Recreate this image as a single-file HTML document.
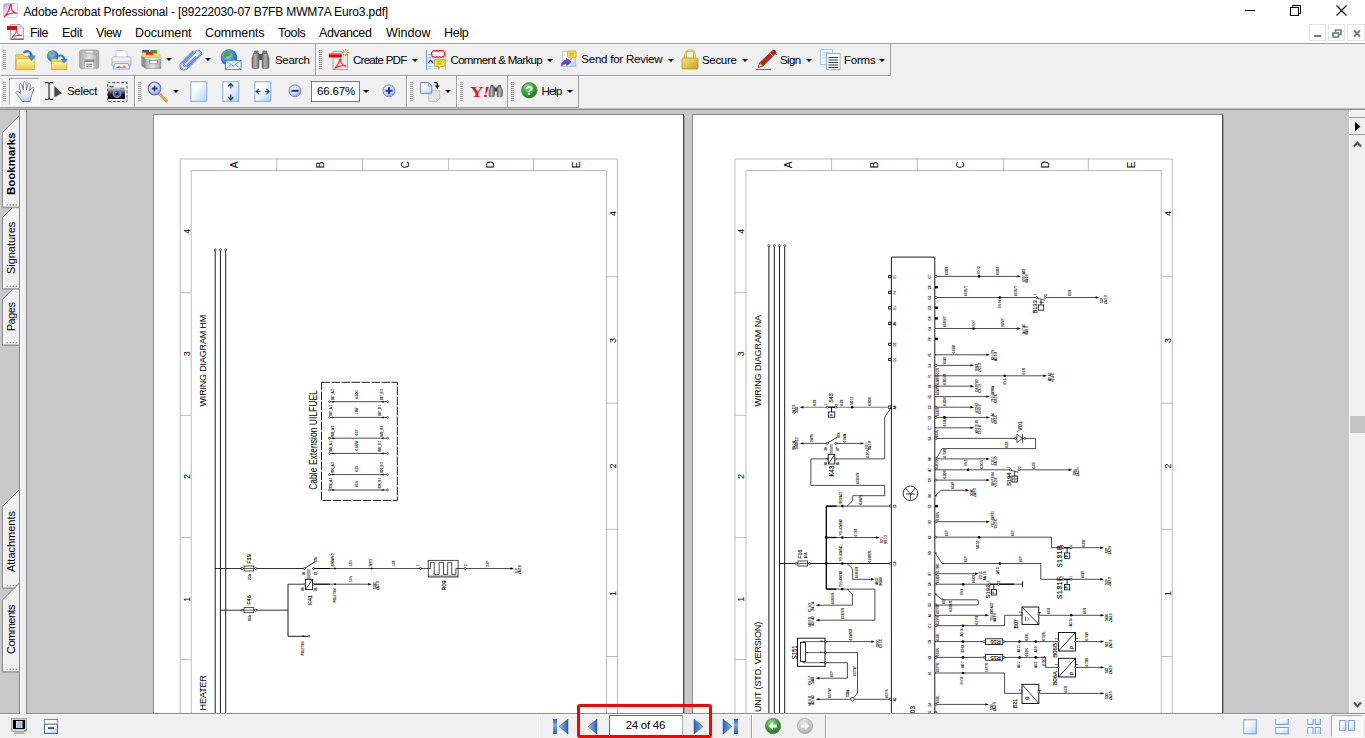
<!DOCTYPE html>
<html><head><meta charset="utf-8"><title>Adobe Acrobat Professional</title>
<style>
html,body{margin:0;padding:0;}
body{width:1365px;height:738px;overflow:hidden;position:relative;background:#fff;font-family:"Liberation Sans",sans-serif;}
.t{position:absolute;white-space:nowrap;}
.a{position:absolute;}
svg{position:absolute;overflow:visible;}
svg text{font-family:"Liberation Sans",sans-serif;}
</style></head><body>
<div class="a" style="left:0px;top:0px;width:1365px;height:22px;background:#fff"></div>
<svg style="left:3px;top:3px" width="15" height="15" viewBox="0 0 15 15"><defs><linearGradient id="ai" x1="0" y1="0" x2="1" y2="1"><stop offset="0" stop-color="#b88ae4"/><stop offset=".55" stop-color="#fff"/><stop offset="1" stop-color="#fff"/></linearGradient></defs>
<rect x=".5" y=".5" width="14" height="14" rx="2" fill="url(#ai)" stroke="#c8c8d0" stroke-width=".8"/>
<path d="M1.5 13.5C4 11 6.5 6.5 7 2.5C7.3 1 8.6 1.2 8.3 2.8C7.6 6 8.5 8.3 13.5 10.3C11 9 5 10.5 1.5 13.5Z" fill="none" stroke="#e8242c" stroke-width="1.2" stroke-linejoin="round"/></svg>
<span class="t" style="left:23.5px;top:5.64px;font-size:12px;line-height:12px;letter-spacing:-0.143px;color:#000;">Adobe Acrobat Professional - [89222030-07 B7FB MWM7A Euro3.pdf]</span>
<svg style="left:1245px;top:10px" width="10" height="1" viewBox="0 0 10 1"><rect width="10" height="1" fill="#000"/></svg>
<svg style="left:1290px;top:5px" width="11" height="11" viewBox="0 0 11 11"><path d="M2.5 2.5V.5H10.5V8.5H8.5" fill="none" stroke="#000"/><rect x=".5" y="2.5" width="8" height="8" fill="#fff" stroke="#000"/></svg>
<svg style="left:1336px;top:5px" width="11" height="11" viewBox="0 0 11 11"><path d="M.5 .5L10.5 10.5M10.5 .5L.5 10.5" stroke="#000" stroke-width="1.1"/></svg>
<div class="a" style="left:0px;top:22px;width:1365px;height:21px;background:#fff"></div>
<svg style="left:7px;top:23.3px" width="18" height="18" viewBox="0 0 18 18"><path d="M3.5 1.5H13L16.5 5V16.5H3.5Z" fill="#f4f4f4" stroke="#9a9a9a" stroke-width=".8"/><path d="M13 1.5V5H16.5" fill="#ddd" stroke="#9a9a9a" stroke-width=".6"/>
<rect x="0" y="3" width="10" height="4" fill="#e60012"/><rect x="3.5" y="15.5" width="13" height="1.2" fill="#555"/>
<path d="M5 14.5C7 12.5 9 10 9.3 7.8C9.5 6.8 10.4 7 10.2 8C9.8 10 10.5 11.4 14.5 12.6C12 12 7.5 12.8 5 14.5Z" fill="none" stroke="#e8242c" stroke-width="1"/></svg>
<span class="t" style="left:30.0px;top:26.62px;font-size:12.5px;line-height:12.5px;letter-spacing:-0.535px;color:#000;">File</span>
<span class="t" style="left:62.0px;top:26.62px;font-size:12.5px;line-height:12.5px;letter-spacing:-0.260px;color:#000;">Edit</span>
<span class="t" style="left:96.0px;top:26.62px;font-size:12.5px;line-height:12.5px;letter-spacing:-0.467px;color:#000;">View</span>
<span class="t" style="left:135.0px;top:26.62px;font-size:12.5px;line-height:12.5px;letter-spacing:-0.058px;color:#000;">Document</span>
<span class="t" style="left:205.0px;top:26.62px;font-size:12.5px;line-height:12.5px;letter-spacing:-0.116px;color:#000;">Comments</span>
<span class="t" style="left:278.0px;top:26.62px;font-size:12.5px;line-height:12.5px;letter-spacing:-0.336px;color:#000;">Tools</span>
<span class="t" style="left:319.0px;top:26.62px;font-size:12.5px;line-height:12.5px;letter-spacing:-0.387px;color:#000;">Advanced</span>
<span class="t" style="left:386.0px;top:26.62px;font-size:12.5px;line-height:12.5px;letter-spacing:0.007px;color:#000;">Window</span>
<span class="t" style="left:444.0px;top:26.62px;font-size:12.5px;line-height:12.5px;letter-spacing:-0.302px;color:#000;">Help</span>
<div class="a" style="left:1309px;top:24px;width:17px;height:17px;border:1px solid #e3e3e3;box-sizing:border-box;background:#fff"></div>
<div class="a" style="left:1328px;top:24px;width:17px;height:17px;border:1px solid #e3e3e3;box-sizing:border-box;background:#fff"></div>
<div class="a" style="left:1347px;top:24px;width:18px;height:17px;border:1px solid #e3e3e3;box-sizing:border-box;background:#fff"></div>
<svg style="left:1314px;top:35px" width="7" height="2" viewBox="0 0 7 2"><rect width="7" height="2" fill="#6c7c90"/></svg>
<svg style="left:1332px;top:29px" width="10" height="9" viewBox="0 0 10 9"><path d="M3.5 3V1H9V5.5H7" fill="none" stroke="#6c7c90" stroke-width="1.6"/><rect x="1" y="4" width="5.5" height="4" fill="#fff" stroke="#6c7c90" stroke-width="1.6"/></svg>
<svg style="left:1353px;top:30px" width="8" height="7" viewBox="0 0 8 7"><path d="M1 .5L7 6.5M7 .5L1 6.5" stroke="#6c7c90" stroke-width="2"/></svg>
<div class="a" style="left:0px;top:43px;width:1365px;height:65px;background:#f0f0f0"></div>
<div class="a" style="left:0px;top:43px;width:1365px;height:1px;background:#a0a0a0"></div>
<div class="a" style="left:0px;top:75px;width:891px;height:1px;background:#a0a0a0"></div>
<div class="a" style="left:0px;top:76px;width:891px;height:1px;background:#fafafa"></div>
<div class="a" style="left:890px;top:44px;width:1px;height:32px;background:#a0a0a0"></div>
<div class="a" style="left:0px;top:44px;width:1px;height:64px;background:#fff"></div>
<div class="a" style="left:315px;top:44px;width:1px;height:31px;background:#a0a0a0"></div>
<div class="a" style="left:316px;top:44px;width:1px;height:31px;background:#fff"></div>
<div class="a" style="left:0px;top:107px;width:579px;height:1px;background:#a0a0a0"></div>
<div class="a" style="left:578px;top:76px;width:1px;height:32px;background:#a0a0a0"></div>
<div class="a" style="left:134px;top:76px;width:1px;height:31px;background:#a0a0a0"></div>
<div class="a" style="left:135px;top:76px;width:1px;height:31px;background:#fff"></div>
<div class="a" style="left:406px;top:76px;width:1px;height:31px;background:#a0a0a0"></div>
<div class="a" style="left:407px;top:76px;width:1px;height:31px;background:#fff"></div>
<div class="a" style="left:456px;top:76px;width:1px;height:31px;background:#a0a0a0"></div>
<div class="a" style="left:457px;top:76px;width:1px;height:31px;background:#fff"></div>
<div class="a" style="left:507px;top:76px;width:1px;height:31px;background:#a0a0a0"></div>
<div class="a" style="left:508px;top:76px;width:1px;height:31px;background:#fff"></div>
<div class="a" style="left:0px;top:108px;width:1365px;height:1px;background:#c0c0c0"></div>
<div class="a" style="left:0px;top:109px;width:1365px;height:1px;background:#8a8a8a"></div>
<svg width="0" height="0" style="position:absolute"><defs>
<linearGradient id="gF" x1="0" y1="0" x2="0" y2="1"><stop offset="0" stop-color="#fff9c0"/><stop offset="1" stop-color="#f0c838"/></linearGradient>
<linearGradient id="gFb" x1="0" y1="0" x2="0" y2="1"><stop offset="0" stop-color="#f4d860"/><stop offset="1" stop-color="#dcae28"/></linearGradient>
<linearGradient id="gBl" x1="0" y1="0" x2="0" y2="1"><stop offset="0" stop-color="#8fc0f0"/><stop offset="1" stop-color="#2a6fc8"/></linearGradient>
<radialGradient id="gGl" cx=".4" cy=".35" r=".7"><stop offset="0" stop-color="#bfe0ff"/><stop offset=".5" stop-color="#4a90e0"/><stop offset="1" stop-color="#1a50b0"/></radialGradient>
<linearGradient id="gGr" x1="0" y1="0" x2="1" y2="0"><stop offset="0" stop-color="#a8a8a8"/><stop offset=".5" stop-color="#e4e4e4"/><stop offset="1" stop-color="#a0a0a0"/></linearGradient>
<linearGradient id="gBn" x1="0" y1="0" x2="1" y2="0"><stop offset="0" stop-color="#6a6a6a"/><stop offset=".45" stop-color="#b4b4b4"/><stop offset="1" stop-color="#666"/></linearGradient>
<linearGradient id="gPg" x1="0" y1="0" x2="1" y2="1"><stop offset="0" stop-color="#ffffff"/><stop offset=".35" stop-color="#fafcff"/><stop offset="1" stop-color="#b4cef2"/></linearGradient>
<radialGradient id="gZ" cx=".4" cy=".35" r=".7"><stop offset="0" stop-color="#ffffff"/><stop offset=".6" stop-color="#c0d4f4"/><stop offset="1" stop-color="#8098d8"/></radialGradient>
<radialGradient id="gHp" cx=".4" cy=".3" r=".8"><stop offset="0" stop-color="#a0e090"/><stop offset=".5" stop-color="#38a038"/><stop offset="1" stop-color="#1a6a20"/></radialGradient>
<radialGradient id="gGy" cx=".4" cy=".3" r=".8"><stop offset="0" stop-color="#e8e8e8"/><stop offset="1" stop-color="#a8a8a8"/></radialGradient>
<linearGradient id="gLk" x1="0" y1="0" x2="1" y2="1"><stop offset="0" stop-color="#f8e880"/><stop offset="1" stop-color="#c8a020"/></linearGradient>
<linearGradient id="gNv" x1="0" y1="0" x2="1" y2="0"><stop offset="0" stop-color="#2a62b8"/><stop offset="1" stop-color="#8ab4ec"/></linearGradient>
<linearGradient id="gNvL" x1="0" y1="0" x2="1" y2="0"><stop offset="0" stop-color="#9cc0f0"/><stop offset="1" stop-color="#2a5cb0"/></linearGradient>
</defs></svg>
<svg style="left:3px;top:50px" width="3" height="20" viewBox="0 0 3 20"><rect x="0" y="0" width="3" height="1" fill="#a0a0a0"/><rect x="0" y="2" width="3" height="1" fill="#a0a0a0"/><rect x="0" y="4" width="3" height="1" fill="#a0a0a0"/><rect x="0" y="6" width="3" height="1" fill="#a0a0a0"/><rect x="0" y="8" width="3" height="1" fill="#a0a0a0"/><rect x="0" y="10" width="3" height="1" fill="#a0a0a0"/><rect x="0" y="12" width="3" height="1" fill="#a0a0a0"/><rect x="0" y="14" width="3" height="1" fill="#a0a0a0"/><rect x="0" y="16" width="3" height="1" fill="#a0a0a0"/><rect x="0" y="18" width="3" height="1" fill="#a0a0a0"/></svg>
<svg style="left:15px;top:49px" width="21" height="22" viewBox="0 0 21 22"><path d="M.6 20.600V6.600Q.6 5.200 2 5.200H7.500L9.800 7.600H18.300Q19.500 7.600 19.500 8.800V20.600Z" fill="url(#gFb)" stroke="#c49a20" stroke-width=".6"/>
<path d="M.6 20.600L1.500 11Q1.600 10 2.600 10H19Q19.900 10 19.800 11L19.300 20.600Z" fill="url(#gF)" stroke="#d4a820" stroke-width=".5"/>
<path d="M8.500 4C11.500 .8 16.500 2 16.800 8" fill="none" stroke="#3a78d0" stroke-width="2.300"/><path d="M12.800 6.800H20.300L16.600 11.800Z" fill="#4a8ae0" stroke="#2a60c0" stroke-width=".4"/></svg>
<svg style="left:47px;top:49px" width="21" height="22" viewBox="0 0 21 22"><circle cx="5.800" cy="7" r="5.600" fill="url(#gGl)" stroke="#3a6cc0" stroke-width=".4"/><path d="M3.500 3.500C5.500 2.500 7.500 3.500 6.500 5.500C5.500 7 4 6 3 8C2 6.500 2.200 4.500 3.500 3.500Z" fill="#68b858"/>
<path d="M4.300 20.600V10.600Q4.300 9.500 5.400 9.500H9L10.500 11H18.800Q19.900 11 19.900 12V20.600Z" fill="url(#gFb)" stroke="#c49a20" stroke-width=".5"/>
<path d="M4.300 20.600L4.900 13.500Q5 12.700 5.800 12.700H19.300Q20 12.700 19.900 13.500L19.500 20.600Z" fill="url(#gF)" stroke="#d4a820" stroke-width=".4"/>
<path d="M11.500 7.500C13.500 5.500 17 6.500 17.300 10.500" fill="none" stroke="#3a78d0" stroke-width="2"/><path d="M14 10H20.300L17.200 14Z" fill="#4a8ae0" stroke="#2a60c0" stroke-width=".4"/></svg>
<svg style="left:79px;top:49px" width="21" height="21" viewBox="0 0 21 21"><path d="M.5 3Q.5 1 2.500 1H17.500Q19.800 1 19.800 3V17.600Q19.800 19.600 17.500 19.600H2.500Q.5 19.600 .5 17.600Z" fill="url(#gGr)" stroke="#909090" stroke-width=".6"/>
<rect x="6" y="1.300" width="9" height="3.600" fill="#d8d8d8" stroke="#888" stroke-width=".5"/><rect x="7.500" y="2" width="5.500" height="1.200" fill="#f4f4f4"/>
<rect x="5.300" y="10.500" width="10" height="2.500" fill="#8a8a8a"/><rect x="5.800" y="13" width="9" height="6.600" fill="#fafafa" stroke="#999" stroke-width=".4"/><path d="M7.300 15.300H13.300M7.300 17.400H13.300" stroke="#666" stroke-width=".9"/></svg>
<svg style="left:111px;top:49px" width="21" height="21" viewBox="0 0 21 21"><path d="M5 9V1.5H13L16 4.5V9Z" fill="#fff" stroke="#a8b8d0" stroke-width=".7"/>
<path d="M1 9.5Q1 8 2.5 8H18.5Q20 8 20 9.5V16Q20 17 19 17H2Q1 17 1 16Z" fill="#dcdcdc" stroke="#999" stroke-width=".7"/>
<rect x="1.5" y="8.5" width="18" height="3" fill="#f2f2f2"/>
<path d="M4 14.5H17L19 20H2Z" fill="#e8f0ff" stroke="#6a9ad8" stroke-width=".7"/><path d="M5 19L8 16.5L10.5 18.5L13 16L16 19Z" fill="#e0a020"/><path d="M5 19L7 17.5L9 19Z" fill="#d04020"/></svg>
<svg style="left:141px;top:49px" width="21" height="21" viewBox="0 0 21 21"><rect x="1.300" y="1" width="6.800" height="3" fill="#2058c8"/><rect x="9.300" y="1" width="6.800" height="3.500" fill="#20b030"/><rect x="4.500" y="3" width="7.500" height="3.500" fill="#e82030"/>
<path d="M1.300 3.500H4.500V6H12V4.500H17V5.500H19V8.500H1.300Z" fill="#f4dc50" stroke="#c8a828" stroke-width=".4"/>
<path d="M.3 6.500L4 9V19.600L.3 16.500Z" fill="#909090"/><rect x="4" y="8.500" width="16" height="11.100" fill="url(#gGr)" stroke="#808080" stroke-width=".5"/><rect x="4" y="8.500" width="16" height="1.500" fill="#f0f0f0" opacity=".7"/>
<rect x="8.500" y="11.600" width="8" height="3.200" fill="#fff" stroke="#777" stroke-width=".6"/></svg>
<svg style="left:166px;top:58px" width="6" height="3" viewBox="0 0 6 3"><path d="M0 0H6L3 3Z" fill="#000"/></svg>
<svg style="left:179px;top:49px" width="22" height="22" viewBox="0 0 22 22"><g fill="none" stroke-linecap="round" transform="translate(11.200,10.800) rotate(45)"><path d="M-3.900 -7.500V8.500A3.900 3.900 0 0 0 3.900 8.500V-10A2.900 2.900 0 0 0 -1.900 -10V6.500A1.900 1.900 0 0 0 1.900 6.500V-5.500" stroke="#4272c0" stroke-width="1.800"/>
<path d="M-3.900 -7.500V8.500A3.900 3.900 0 0 0 3.900 8.500V-10A2.900 2.900 0 0 0 -1.900 -10V6.500A1.900 1.900 0 0 0 1.900 6.500V-5.500" stroke="#cfe2fa" stroke-width=".7"/></g></svg>
<svg style="left:205px;top:58px" width="6" height="3" viewBox="0 0 6 3"><path d="M0 0H6L3 3Z" fill="#000"/></svg>
<svg style="left:220px;top:49px" width="22" height="21" viewBox="0 0 22 21"><circle cx="9" cy="8.500" r="8" fill="url(#gGl)" stroke="#2a5cb0" stroke-width=".5"/><path d="M7 2C10 1.500 12 4 10.500 6C9 8 7 6.500 6 9C4.500 10 3 7 4 4.500C5 3 6 2.300 7 2ZM12 9C14.500 8 15 10.500 14 12C13 12.500 12 11 12 9Z" fill="#48a848"/>
<rect x="5.500" y="11.500" width="15.500" height="9" fill="#f4f8ff" stroke="#4a80d0" stroke-width=".9"/><path d="M5.500 11.500L13.250 17L21 11.500M5.500 20.500L11 15.500M21 20.500L15.500 15.500" fill="none" stroke="#4a80d0" stroke-width=".8"/></svg>
<svg style="left:251px;top:49px" width="20" height="21" viewBox="0 0 20 21"><rect x="3" y="1.500" width="4.500" height="4" rx="1" fill="#707880"/><rect x="11.500" y="1.500" width="4.500" height="4" rx="1" fill="#707880"/>
<rect x="7" y="5" width="5" height="6" fill="#555"/>
<path d="M2.500 4.500H8V18Q8 19.500 6.500 19.500H2.500Q1 19.500 1 18V9Z" fill="url(#gBn)" stroke="#606060" stroke-width=".6"/>
<path d="M11 4.500H16.500L18 9V18Q18 19.500 16.500 19.500H12.500Q11 19.500 11 18Z" fill="url(#gBn)" stroke="#606060" stroke-width=".6"/></svg>
<span class="t" style="left:275.0px;top:54.87px;font-size:11.5px;line-height:11.5px;letter-spacing:-0.323px;color:#000;">Search</span>
<svg style="left:319px;top:50px" width="3" height="20" viewBox="0 0 3 20"><rect x="0" y="0" width="3" height="1" fill="#a0a0a0"/><rect x="0" y="2" width="3" height="1" fill="#a0a0a0"/><rect x="0" y="4" width="3" height="1" fill="#a0a0a0"/><rect x="0" y="6" width="3" height="1" fill="#a0a0a0"/><rect x="0" y="8" width="3" height="1" fill="#a0a0a0"/><rect x="0" y="10" width="3" height="1" fill="#a0a0a0"/><rect x="0" y="12" width="3" height="1" fill="#a0a0a0"/><rect x="0" y="14" width="3" height="1" fill="#a0a0a0"/><rect x="0" y="16" width="3" height="1" fill="#a0a0a0"/><rect x="0" y="18" width="3" height="1" fill="#a0a0a0"/></svg>
<svg style="left:328px;top:49px" width="22" height="22" viewBox="0 0 22 22"><path d="M5 2.300H15.600L19.500 6V20.600H5Z" fill="#ececec" stroke="#8e8e8e" stroke-width=".8"/>
<rect x=".8" y="4.500" width="13" height="4" fill="#e60012"/><path d="M.8 4.500H13.800V5.700H.8Z" fill="#ff9090" opacity=".7"/>
<path d="M7 19.300C9.500 16.800 11.300 13.500 11.600 10.800C11.800 9.500 13 9.800 12.800 11C12.300 13.500 13.200 15.400 18 17C15 16.200 10 17.300 7 19.300Z" fill="none" stroke="#f03a44" stroke-width="1.300" stroke-linejoin="round"/>
<g stroke="#f08820" stroke-width="1"><path d="M17.500 0V7M14 3.500H21M15 1L20 6M20 1L15 6"/></g><circle cx="17.500" cy="3.500" r="1.700" fill="#ffe860"/></svg>
<span class="t" style="left:353.0px;top:54.87px;font-size:11.5px;line-height:11.5px;letter-spacing:-0.721px;color:#000;">Create PDF</span>
<svg style="left:412px;top:59px" width="6" height="3" viewBox="0 0 6 3"><path d="M0 0H6L3 3Z" fill="#000"/></svg>
<svg style="left:425px;top:49px" width="22" height="22" viewBox="0 0 22 22"><rect x="2" y="1" width="19" height="20" fill="#eef4fd"/><rect x=".9" y="1" width="1.300" height="20" fill="#7aa0e8"/><rect x="20.200" y="1" width=".8" height="20" fill="#a8c4f0"/>
<path d="M3 5.500H20M3 8.500H20M3 11.500H9M3 14.500H9M3 17.500H12M3 19.800H12" stroke="#a8c0ec" stroke-width=".7"/>
<path d="M7.500 2.600Q8.600 1 10.200 2.200Q11.600 .8 13.200 2.200Q14.800 .8 16.200 2.200Q18 1 19 2.800Q20.600 4.500 19.200 6Q19.500 8 17.500 7.600Q16.200 9 14.600 7.800Q13 9 11.500 7.800Q9.800 9 8.500 7.600Q6.500 7.800 7 6Q5.500 4.200 7.500 2.600Z" fill="#fff" fill-opacity=".7" stroke="#f02028" stroke-width="1.200"/>
<path d="M3.200 13.800L5.600 11.300L8 13.800" fill="none" stroke="#1010d8" stroke-width="1.200"/>
<path d="M10.500 10.300H19Q20 10.300 20 11.300V16.300Q20 17.300 19 17.300H15.800L13.500 20.500V17.300H10.500Q9.500 17.300 9.500 16.300V11.300Q9.500 10.300 10.500 10.300Z" fill="#fae440" stroke="#b08a18" stroke-width=".8"/><path d="M11.800 12.700H17M11.800 14.800H16" stroke="#a88818" stroke-width=".8"/></svg>
<span class="t" style="left:450.5px;top:54.87px;font-size:11.5px;line-height:11.5px;letter-spacing:-0.672px;color:#000;">Comment &amp; Markup</span>
<svg style="left:546.5px;top:59px" width="6" height="3" viewBox="0 0 6 3"><path d="M0 0H6L3 3Z" fill="#000"/></svg>
<svg style="left:561px;top:49px" width="17" height="21" viewBox="0 0 17 21"><rect x="1.800" y="2.200" width="13" height="15.300" fill="url(#gPg)" stroke="#8aa8e0" stroke-width=".6"/>
<path d="M7.600 2H14.200Q15.200 2 15.200 3V7.200Q15.200 8.200 14.200 8.200H11.800L10 10.600V8.200H7.600Q6.600 8.200 6.600 7.200V3Q6.600 2 7.600 2Z" fill="#fae440" stroke="#b89818" stroke-width=".6"/><path d="M8.300 4.200H13.500M8.300 6H13" stroke="#b09018" stroke-width=".7"/>
<path d="M.3 17.300C.3 13 2.500 11.300 5.500 11.300V9.300L10.300 13L5.500 16.700V14.700C3.500 14.700 1.800 15.300 .3 17.300Z" fill="#6a48c0" stroke="#3a2890" stroke-width=".5"/></svg>
<span class="t" style="left:581.3px;top:53.87px;font-size:11.5px;line-height:11.5px;letter-spacing:-0.225px;color:#000;">Send for Review</span>
<svg style="left:668px;top:59px" width="6" height="3" viewBox="0 0 6 3"><path d="M0 0H6L3 3Z" fill="#000"/></svg>
<svg style="left:681px;top:49px" width="18" height="21" viewBox="0 0 18 21"><path d="M4.500 9V6Q4.500 1.500 9 1.500Q13.500 1.500 13.500 6V9" fill="none" stroke="#c8a020" stroke-width="2.200"/><path d="M4.500 9V6Q4.500 1.500 9 1.500Q13.500 1.500 13.500 6V9" fill="none" stroke="#f8e480" stroke-width=".8"/>
<rect x="1" y="9" width="16" height="11" rx="1" fill="url(#gLk)" stroke="#b08810" stroke-width=".7"/></svg>
<span class="t" style="left:702.0px;top:54.87px;font-size:11.5px;line-height:11.5px;letter-spacing:-0.323px;color:#000;">Secure</span>
<svg style="left:741.5px;top:59px" width="6" height="3" viewBox="0 0 6 3"><path d="M0 0H6L3 3Z" fill="#000"/></svg>
<svg style="left:755px;top:49px" width="22" height="21" viewBox="0 0 22 21"><path d="M1 20.500H16" stroke="#444" stroke-width=".8"/><path d="M3 18.500L5 13.500L17.500 1.500Q19 .5 20.500 2Q21.500 3.500 20 5L8 17Z" fill="#c02818" stroke="#701008" stroke-width=".6"/><path d="M3 18.500L5 13.500L8 17Z" fill="#e8d0a0" stroke="#701008" stroke-width=".4"/><path d="M15 4L18 7" stroke="#f0c8c0" stroke-width="1"/><path d="M18.500 .8L21.500 6" stroke="#333" stroke-width=".9"/></svg>
<span class="t" style="left:780.0px;top:54.87px;font-size:11.5px;line-height:11.5px;letter-spacing:-0.629px;color:#000;">Sign</span>
<svg style="left:806px;top:59px" width="6" height="3" viewBox="0 0 6 3"><path d="M0 0H6L3 3Z" fill="#000"/></svg>
<svg style="left:820px;top:49px" width="21" height="21" viewBox="0 0 21 21"><rect x=".5" y=".5" width="12" height="15" fill="#f8fbff" stroke="#9ab8e8" stroke-width=".8"/><path d="M2.500 3.500H10.500M2.500 6H10.500M2.500 8.500H10.500" stroke="#b0c4e8" stroke-width=".8"/>
<rect x="6.500" y="4.500" width="13.500" height="16" fill="#fff" stroke="#7aa0e0" stroke-width=".8"/><path d="M8.500 8.500H18M8.500 11H18M8.500 13.500H18M8.500 16H18M8.500 18.500H18" stroke="#222" stroke-width=".9"/></svg>
<span class="t" style="left:844.0px;top:54.87px;font-size:11.5px;line-height:11.5px;letter-spacing:-0.215px;color:#000;">Forms</span>
<svg style="left:878.5px;top:59px" width="6" height="3" viewBox="0 0 6 3"><path d="M0 0H6L3 3Z" fill="#000"/></svg>
<svg style="left:3px;top:82px" width="3" height="20" viewBox="0 0 3 20"><rect x="0" y="0" width="3" height="1" fill="#a0a0a0"/><rect x="0" y="2" width="3" height="1" fill="#a0a0a0"/><rect x="0" y="4" width="3" height="1" fill="#a0a0a0"/><rect x="0" y="6" width="3" height="1" fill="#a0a0a0"/><rect x="0" y="8" width="3" height="1" fill="#a0a0a0"/><rect x="0" y="10" width="3" height="1" fill="#a0a0a0"/><rect x="0" y="12" width="3" height="1" fill="#a0a0a0"/><rect x="0" y="14" width="3" height="1" fill="#a0a0a0"/><rect x="0" y="16" width="3" height="1" fill="#a0a0a0"/><rect x="0" y="18" width="3" height="1" fill="#a0a0a0"/></svg>
<div class="a" style="left:9px;top:78px;width:31px;height:27px;background:#f7f7f7;border:1px solid #fff;border-top-color:#a8a8a8;border-left-color:#a8a8a8;box-sizing:border-box"></div>
<svg style="left:15px;top:81px" width="20" height="22" viewBox="0 0 20 22"><defs><linearGradient id="gHd" x1="0" y1="0" x2="0" y2="1"><stop offset=".4" stop-color="#fff"/><stop offset="1" stop-color="#c4cee0"/></linearGradient></defs>
<path d="M7 20.500C5.500 17.500 3.500 15 1.600 12.800C.2 11.200 1.800 9.300 3.500 10.600L5.800 12.600L4.300 4.600C3.900 2.600 6.300 2 6.900 3.900L8.300 9L8.400 2.300C8.400 .3 11 .3 11.100 2.300L11.300 9L13 3.300C13.600 1.500 15.900 2.200 15.500 4.100L14.300 10L16.800 6.800C17.900 5.400 19.700 6.600 18.800 8.200C17.200 11.500 16.200 15.500 15.200 20.500Z" fill="url(#gHd)" stroke="#6a7890" stroke-width=".9" stroke-linejoin="round"/></svg>
<svg style="left:44px;top:82px" width="19" height="18" viewBox="0 0 19 18"><path d="M1 .7H4Q5 .7 5 2V16Q5 17.300 4 17.300H1M9 .7H6Q5 .7 5 2M9 17.300H6Q5 17.300 5 16" fill="none" stroke="#000" stroke-width=".95"/><path d="M10.300 4V15.200L18 11.300Z" fill="#484848"/></svg>
<span class="t" style="left:67.0px;top:85.57px;font-size:11.5px;line-height:11.5px;letter-spacing:-0.327px;color:#000;">Select</span>
<svg style="left:107px;top:82px" width="21" height="20" viewBox="0 0 21 20"><rect x=".7" y=".7" width="19.300" height="18.800" fill="none" stroke="#505050" stroke-width="1" stroke-dasharray="2.800 1.700"/>
<defs><linearGradient id="gCm" x1="0" y1="0" x2="0" y2="1"><stop offset="0" stop-color="#e8e8e8"/><stop offset=".3" stop-color="#888"/><stop offset=".6" stop-color="#222"/><stop offset="1" stop-color="#000"/></linearGradient></defs>
<rect x="1" y="5" width="17" height="12" fill="url(#gCm)"/><rect x="2.500" y="3.800" width="4" height="1.500" fill="#555"/><rect x="13" y="5.800" width="4" height="1.600" fill="#50a8f8"/>
<circle cx="10" cy="11.800" r="4.300" fill="#8c98b0"/><circle cx="10" cy="11.800" r="3" fill="#3858b8"/><circle cx="10" cy="11.800" r="1.400" fill="#0c1430"/><circle cx="9" cy="10.800" r=".7" fill="#a8d0ff"/></svg>
<svg style="left:138px;top:82px" width="3" height="20" viewBox="0 0 3 20"><rect x="0" y="0" width="3" height="1" fill="#a0a0a0"/><rect x="0" y="2" width="3" height="1" fill="#a0a0a0"/><rect x="0" y="4" width="3" height="1" fill="#a0a0a0"/><rect x="0" y="6" width="3" height="1" fill="#a0a0a0"/><rect x="0" y="8" width="3" height="1" fill="#a0a0a0"/><rect x="0" y="10" width="3" height="1" fill="#a0a0a0"/><rect x="0" y="12" width="3" height="1" fill="#a0a0a0"/><rect x="0" y="14" width="3" height="1" fill="#a0a0a0"/><rect x="0" y="16" width="3" height="1" fill="#a0a0a0"/><rect x="0" y="18" width="3" height="1" fill="#a0a0a0"/></svg>
<svg style="left:147px;top:81px" width="22" height="22" viewBox="0 0 22 22"><path d="M11 11.500L19.500 20" stroke="#d8941c" stroke-width="2.600" stroke-linecap="round"/><path d="M11 11.500L19.500 20" stroke="#f8d070" stroke-width=".8" stroke-linecap="round"/>
<circle cx="7.500" cy="7.500" r="6.300" fill="url(#gZ)" stroke="#7070c0" stroke-width="1.200"/><path d="M4.500 7.500H10.500M7.500 4.500V10.500" stroke="#2030a0" stroke-width="1.800"/></svg>
<svg style="left:172.5px;top:90px" width="6" height="3" viewBox="0 0 6 3"><path d="M0 0H6L3 3Z" fill="#000"/></svg>
<svg style="left:190px;top:81px" width="18" height="22" viewBox="0 0 18 22"><rect x=".8" y=".8" width="16" height="19.500" fill="url(#gPg)" stroke="#88a8e0" stroke-width="1"/></svg>
<svg style="left:222px;top:81px" width="18" height="22" viewBox="0 0 18 22"><rect x=".8" y=".8" width="16" height="19.500" fill="url(#gPg)" stroke="#88a8e0" stroke-width="1"/><path d="M8.800 3V7.500M8.800 13.500V18.500" stroke="#204080" stroke-width="1.200"/><path d="M6.300 5.500L8.800 2.500L11.300 5.500M6.300 16L8.800 19L11.300 16" fill="none" stroke="#204080" stroke-width="1.200"/></svg>
<svg style="left:254px;top:81px" width="18" height="22" viewBox="0 0 18 22"><rect x=".8" y=".8" width="16" height="19.500" fill="url(#gPg)" stroke="#88a8e0" stroke-width="1"/><path d="M2.500 10.500H6.500M11 10.500H15" stroke="#204080" stroke-width="1.200"/><path d="M5 8L2.300 10.500L5 13M12.500 8L15.200 10.500L12.500 13" fill="none" stroke="#204080" stroke-width="1.200"/></svg>
<svg style="left:288px;top:84px" width="14" height="14" viewBox="0 0 14 14"><circle cx="7" cy="6.800" r="6" fill="url(#gZ)" stroke="#8088c8" stroke-width="1"/><rect x="3.500" y="5.800" width="7" height="2" fill="#2030a0"/></svg>
<div class="a" style="left:311px;top:81px;width:49px;height:21px;background:#fff;border:1px solid #7a7a7a;box-sizing:border-box"></div>
<span class="t" style="left:317.0px;top:85.77px;font-size:11.5px;line-height:11.5px;letter-spacing:-0.167px;color:#000;">66.67%</span>
<svg style="left:363px;top:90px" width="6" height="3" viewBox="0 0 6 3"><path d="M0 0H6L3 3Z" fill="#000"/></svg>
<svg style="left:382px;top:84px" width="14" height="14" viewBox="0 0 14 14"><circle cx="7" cy="6.800" r="6" fill="url(#gZ)" stroke="#8088c8" stroke-width="1"/><path d="M3.500 6.800H10.500M7 3.300V10.300" stroke="#2030a0" stroke-width="2"/></svg>
<svg style="left:410px;top:82px" width="3" height="20" viewBox="0 0 3 20"><rect x="0" y="0" width="3" height="1" fill="#a0a0a0"/><rect x="0" y="2" width="3" height="1" fill="#a0a0a0"/><rect x="0" y="4" width="3" height="1" fill="#a0a0a0"/><rect x="0" y="6" width="3" height="1" fill="#a0a0a0"/><rect x="0" y="8" width="3" height="1" fill="#a0a0a0"/><rect x="0" y="10" width="3" height="1" fill="#a0a0a0"/><rect x="0" y="12" width="3" height="1" fill="#a0a0a0"/><rect x="0" y="14" width="3" height="1" fill="#a0a0a0"/><rect x="0" y="16" width="3" height="1" fill="#a0a0a0"/><rect x="0" y="18" width="3" height="1" fill="#a0a0a0"/></svg>
<svg style="left:420px;top:81px" width="21" height="22" viewBox="0 0 21 22"><path d="M8.800 9.300H19.700V17.300L16.700 20.300H8.800Z" fill="#e6e6e6" stroke="#b0b0b0" stroke-width=".7"/><path d="M16.700 20.300V17.300H19.700Z" fill="#fff" stroke="#b0b0b0" stroke-width=".5"/>
<path d="M.7 1.500H8.300L11.800 5V12.300H.7Z" fill="url(#gPg)" stroke="#6888c8" stroke-width="1"/><path d="M8.300 1.500V5H11.800" fill="none" stroke="#6888c8" stroke-width=".8"/>
<path d="M14 1.600H16.300Q17.300 1.600 17.300 2.600V5.500" fill="none" stroke="#000" stroke-width="1.300"/><path d="M14.800 4.500L17.300 7.800L19.800 4.500Z" fill="#000"/></svg>
<svg style="left:444.5px;top:90px" width="6" height="3" viewBox="0 0 6 3"><path d="M0 0H6L3 3Z" fill="#000"/></svg>
<svg style="left:460px;top:82px" width="3" height="20" viewBox="0 0 3 20"><rect x="0" y="0" width="3" height="1" fill="#a0a0a0"/><rect x="0" y="2" width="3" height="1" fill="#a0a0a0"/><rect x="0" y="4" width="3" height="1" fill="#a0a0a0"/><rect x="0" y="6" width="3" height="1" fill="#a0a0a0"/><rect x="0" y="8" width="3" height="1" fill="#a0a0a0"/><rect x="0" y="10" width="3" height="1" fill="#a0a0a0"/><rect x="0" y="12" width="3" height="1" fill="#a0a0a0"/><rect x="0" y="14" width="3" height="1" fill="#a0a0a0"/><rect x="0" y="16" width="3" height="1" fill="#a0a0a0"/><rect x="0" y="18" width="3" height="1" fill="#a0a0a0"/></svg>
<span class="t" style="left:469.500px;top:83.500px;font-family:'Liberation Serif',serif;font-weight:bold;font-size:15.500px;line-height:16px;color:#e8101c;transform:scaleX(1.220);transform-origin:0 0">Y<i style="margin-left:-1px">!</i></span>
<svg style="left:489px;top:85px" width="14" height="12" viewBox="0 0 14 12"><rect x="1.500" y="0" width="3" height="2.500" fill="#4a6a9a"/><rect x="9" y="0" width="3" height="2.500" fill="#4a6a9a"/><rect x="4.500" y="2.500" width="4.500" height="4" fill="#3a3a3a"/>
<path d="M1.500 1.800H5.500V10.500Q5.500 11.800 4.200 11.800H1.300Q0 11.800 0 10.500V5.500Z" fill="url(#gBn)" stroke="#505050" stroke-width=".5"/><path d="M8 1.800H12L13.500 5.500V10.500Q13.500 11.800 12.200 11.800H9.300Q8 11.800 8 10.500Z" fill="url(#gBn)" stroke="#505050" stroke-width=".5"/></svg>
<svg style="left:511px;top:82px" width="3" height="20" viewBox="0 0 3 20"><rect x="0" y="0" width="3" height="1" fill="#a0a0a0"/><rect x="0" y="2" width="3" height="1" fill="#a0a0a0"/><rect x="0" y="4" width="3" height="1" fill="#a0a0a0"/><rect x="0" y="6" width="3" height="1" fill="#a0a0a0"/><rect x="0" y="8" width="3" height="1" fill="#a0a0a0"/><rect x="0" y="10" width="3" height="1" fill="#a0a0a0"/><rect x="0" y="12" width="3" height="1" fill="#a0a0a0"/><rect x="0" y="14" width="3" height="1" fill="#a0a0a0"/><rect x="0" y="16" width="3" height="1" fill="#a0a0a0"/><rect x="0" y="18" width="3" height="1" fill="#a0a0a0"/></svg>
<svg style="left:521px;top:82px" width="17" height="17" viewBox="0 0 17 17"><circle cx="8.300" cy="8.300" r="7.800" fill="url(#gHp)" stroke="#2a7a2a" stroke-width=".6"/></svg>
<span class="t" style="left:525.3px;top:84px;font-weight:bold;font-size:13px;line-height:13px;color:#fff">?</span>
<span class="t" style="left:541.5px;top:86.07px;font-size:11.5px;line-height:11.5px;letter-spacing:-0.913px;color:#000;">Help</span>
<svg style="left:566.5px;top:90px" width="6" height="3" viewBox="0 0 6 3"><path d="M0 0H6L3 3Z" fill="#000"/></svg>
<div class="a" style="left:0px;top:110px;width:1365px;height:603px;background:#c8c8c8"></div>
<div class="a" style="left:19px;top:110px;width:1px;height:604px;background:#8a8a8a"></div>
<div class="a" style="left:20px;top:110px;width:6px;height:604px;background:#f0f0f0"></div>
<div class="a" style="left:20px;top:110px;width:1px;height:604px;background:#fafafa"></div>
<div class="a" style="left:26px;top:110px;width:1px;height:604px;background:#8a8a8a"></div>
<svg style="left:0px;top:0px" width="27" height="713" viewBox="0 0 27 713"><path d="M2.500 345.4 L2.500 299.3 L19.500 282.3 L19.500 345.4 Z" fill="#f0f0f0" stroke="#858585" stroke-width="1"/><path d="M3.500 344.4 L3.500 299.8 L18.500 284.8" fill="none" stroke="#fff" stroke-width="1"/><path d="M3 344.9 H19.500" stroke="#a8a8a8" stroke-width="1"/><rect x="6" y="341.4" width="2" height="2" fill="#fff"/><rect x="6.5" y="341.9" width="1.500" height="1.500" fill="#a0a0a0"/><rect x="9" y="341.4" width="2" height="2" fill="#fff"/><rect x="9.5" y="341.9" width="1.500" height="1.500" fill="#a0a0a0"/><rect x="12" y="341.4" width="2" height="2" fill="#fff"/><rect x="12.5" y="341.9" width="1.500" height="1.500" fill="#a0a0a0"/><rect x="15" y="341.4" width="2" height="2" fill="#fff"/><rect x="15.5" y="341.9" width="1.500" height="1.500" fill="#a0a0a0"/><text transform="translate(15,331.3) rotate(-90)" font-size="11"  letter-spacing="-0.498" fill="#000">Pages</text><path d="M2.500 289 L2.500 217.5 L19.500 200.5 L19.500 289 Z" fill="#f0f0f0" stroke="#858585" stroke-width="1"/><path d="M3.500 288 L3.500 218 L18.500 203" fill="none" stroke="#fff" stroke-width="1"/><path d="M3 288.5 H19.500" stroke="#a8a8a8" stroke-width="1"/><rect x="6" y="285" width="2" height="2" fill="#fff"/><rect x="6.5" y="285.5" width="1.500" height="1.500" fill="#a0a0a0"/><rect x="9" y="285" width="2" height="2" fill="#fff"/><rect x="9.5" y="285.5" width="1.500" height="1.500" fill="#a0a0a0"/><rect x="12" y="285" width="2" height="2" fill="#fff"/><rect x="12.5" y="285.5" width="1.500" height="1.500" fill="#a0a0a0"/><rect x="15" y="285" width="2" height="2" fill="#fff"/><rect x="15.5" y="285.5" width="1.500" height="1.500" fill="#a0a0a0"/><text transform="translate(15,274) rotate(-90)" font-size="11"  letter-spacing="-0.039" fill="#000">Signatures</text><path d="M2.500 207.6 L2.500 132.4 L19.500 115.4 L19.500 207.6 Z" fill="#f0f0f0" stroke="#858585" stroke-width="1"/><path d="M3.500 206.6 L3.500 132.9 L18.500 117.9" fill="none" stroke="#fff" stroke-width="1"/><path d="M3 207.1 H19.500" stroke="#a8a8a8" stroke-width="1"/><rect x="6" y="203.6" width="2" height="2" fill="#fff"/><rect x="6.5" y="204.1" width="1.500" height="1.500" fill="#a0a0a0"/><rect x="9" y="203.6" width="2" height="2" fill="#fff"/><rect x="9.5" y="204.1" width="1.500" height="1.500" fill="#a0a0a0"/><rect x="12" y="203.6" width="2" height="2" fill="#fff"/><rect x="12.5" y="204.1" width="1.500" height="1.500" fill="#a0a0a0"/><rect x="15" y="203.6" width="2" height="2" fill="#fff"/><rect x="15.5" y="204.1" width="1.500" height="1.500" fill="#a0a0a0"/><text transform="translate(15,195) rotate(-90)" font-size="11.5" font-weight="bold" letter-spacing="-0.015" fill="#000">Bookmarks</text><path d="M2.500 588.4 L2.500 506.5 L19.500 489.5 L19.500 588.4 Z" fill="#f0f0f0" stroke="#858585" stroke-width="1"/><path d="M3.500 587.4 L3.500 507 L18.500 492" fill="none" stroke="#fff" stroke-width="1"/><path d="M3 587.9 H19.500" stroke="#a8a8a8" stroke-width="1"/><rect x="6" y="584.4" width="2" height="2" fill="#fff"/><rect x="6.5" y="584.9" width="1.500" height="1.500" fill="#a0a0a0"/><rect x="9" y="584.4" width="2" height="2" fill="#fff"/><rect x="9.5" y="584.9" width="1.500" height="1.500" fill="#a0a0a0"/><rect x="12" y="584.4" width="2" height="2" fill="#fff"/><rect x="12.5" y="584.9" width="1.500" height="1.500" fill="#a0a0a0"/><rect x="15" y="584.4" width="2" height="2" fill="#fff"/><rect x="15.5" y="584.9" width="1.500" height="1.500" fill="#a0a0a0"/><text transform="translate(15,572) rotate(-90)" font-size="11"  letter-spacing="-0.012" fill="#000">Attachments</text><path d="M2.500 672 L2.500 600 L19.500 583 L19.500 672 Z" fill="#f0f0f0" stroke="#858585" stroke-width="1"/><path d="M3.500 671 L3.500 600.5 L18.500 585.5" fill="none" stroke="#fff" stroke-width="1"/><path d="M3 671.5 H19.500" stroke="#a8a8a8" stroke-width="1"/><rect x="6" y="668" width="2" height="2" fill="#fff"/><rect x="6.5" y="668.5" width="1.500" height="1.500" fill="#a0a0a0"/><rect x="9" y="668" width="2" height="2" fill="#fff"/><rect x="9.5" y="668.5" width="1.500" height="1.500" fill="#a0a0a0"/><rect x="12" y="668" width="2" height="2" fill="#fff"/><rect x="12.5" y="668.5" width="1.500" height="1.500" fill="#a0a0a0"/><rect x="15" y="668" width="2" height="2" fill="#fff"/><rect x="15.5" y="668.5" width="1.500" height="1.500" fill="#a0a0a0"/><text transform="translate(15,654) rotate(-90)" font-size="11"  letter-spacing="-0.522" fill="#000">Comments</text></svg>
<div class="a" style="left:1349px;top:110px;width:16px;height:603px;background:#f0f0f0"></div>
<div class="a" style="left:1349px;top:110px;width:1px;height:603px;background:#fff"></div>
<div class="a" style="left:1349px;top:117px;width:16px;height:1px;background:#a0a0a0"></div>
<div class="a" style="left:1349px;top:134px;width:16px;height:1px;background:#a0a0a0"></div>
<svg style="left:1355px;top:122px" width="6" height="9" viewBox="0 0 6 9"><path d="M0 0V9L5.500 4.500Z" fill="#000"/></svg>
<svg style="left:1353px;top:141px" width="9" height="6" viewBox="0 0 9 6"><path d="M1 5.500L4.500 1.800L8 5.500" fill="none" stroke="#505050" stroke-width="2.100"/></svg>
<svg style="left:1353px;top:702px" width="9" height="6" viewBox="0 0 9 6"><path d="M1 .5L4.500 4.200L8 .5" fill="none" stroke="#505050" stroke-width="2.100"/></svg>
<div class="a" style="left:1350px;top:416px;width:15px;height:17px;background:#c4c4c4"></div>
<div class="a" style="left:153px;top:114px;width:531px;height:600px;background:#8c8c8c"></div>
<div class="a" style="left:683px;top:114px;width:1px;height:600px;background:#505050"></div>
<div class="a" style="left:684px;top:116px;width:1px;height:598px;background:#9a9a9a"></div>
<div class="a" style="left:154px;top:115px;width:529px;height:599px;background:#fff"></div>
<div class="a" style="left:692px;top:114px;width:531px;height:600px;background:#8c8c8c"></div>
<div class="a" style="left:1222px;top:114px;width:1px;height:600px;background:#505050"></div>
<div class="a" style="left:1223px;top:116px;width:1px;height:598px;background:#9a9a9a"></div>
<div class="a" style="left:693px;top:115px;width:529px;height:599px;background:#fff"></div>
<svg style="left:0;top:0;overflow:hidden" width="1365" height="713" viewBox="0 0 1365 713"><polyline points="180.2,714 180.2,159 617.5,159 617.5,714" fill="none" stroke="#bcbcbc" stroke-width="1" /><polyline points="191.2,714 191.2,170.5 606.5,170.5 606.5,714" fill="none" stroke="#bcbcbc" stroke-width="1" /><polyline points="276.8,159 276.8,170.5" fill="none" stroke="#bcbcbc" stroke-width="1" /><polyline points="362.5,159 362.5,170.5" fill="none" stroke="#bcbcbc" stroke-width="1" /><polyline points="448.6,159 448.6,170.5" fill="none" stroke="#bcbcbc" stroke-width="1" /><polyline points="533.5,159 533.5,170.5" fill="none" stroke="#bcbcbc" stroke-width="1" /><text transform="translate(237.6,168.2) rotate(-90)" font-size="10" fill="#000" text-anchor="start">A</text><text transform="translate(323.6,168.2) rotate(-90)" font-size="10" fill="#000" text-anchor="start">B</text><text transform="translate(408.8,168.2) rotate(-90)" font-size="10" fill="#000" text-anchor="start">C</text><text transform="translate(494.3,168.2) rotate(-90)" font-size="10" fill="#000" text-anchor="start">D</text><text transform="translate(579.8,168.2) rotate(-90)" font-size="10" fill="#000" text-anchor="start">E</text><polyline points="180.2,292.7 191.2,292.7" fill="none" stroke="#bcbcbc" stroke-width="1" /><polyline points="180.2,415.3 191.2,415.3" fill="none" stroke="#bcbcbc" stroke-width="1" /><polyline points="180.2,537.5 191.2,537.5" fill="none" stroke="#bcbcbc" stroke-width="1" /><polyline points="180.2,659.6 191.2,659.6" fill="none" stroke="#bcbcbc" stroke-width="1" /><polyline points="606.5,276.7 617.5,276.7" fill="none" stroke="#bcbcbc" stroke-width="1" /><polyline points="606.5,403.2 617.5,403.2" fill="none" stroke="#bcbcbc" stroke-width="1" /><polyline points="606.5,529.3 617.5,529.3" fill="none" stroke="#bcbcbc" stroke-width="1" /><polyline points="606.5,656.5 617.5,656.5" fill="none" stroke="#bcbcbc" stroke-width="1" /><text transform="translate(189.6,233.7) rotate(-90)" font-size="9" fill="#000" text-anchor="start">4</text><text transform="translate(189.6,356.3) rotate(-90)" font-size="9" fill="#000" text-anchor="start">3</text><text transform="translate(189.6,479.1) rotate(-90)" font-size="9" fill="#000" text-anchor="start">2</text><text transform="translate(189.6,601.7) rotate(-90)" font-size="9" fill="#000" text-anchor="start">1</text><text transform="translate(615.8,216) rotate(-90)" font-size="9" fill="#000" text-anchor="start">4</text><text transform="translate(615.8,342.9) rotate(-90)" font-size="9" fill="#000" text-anchor="start">3</text><text transform="translate(615.8,468.5) rotate(-90)" font-size="9" fill="#000" text-anchor="start">2</text><text transform="translate(615.8,595.9) rotate(-90)" font-size="9" fill="#000" text-anchor="start">1</text><text transform="translate(205.8,406.5) rotate(-90)" font-size="9" fill="#000" text-anchor="start" letter-spacing="-0.176">WIRING DIAGRAM HM</text><text transform="translate(205.8,710.5) rotate(-90)" font-size="9" fill="#000" text-anchor="start" letter-spacing="-0.056">HEATER</text><polyline points="215.2,250.5 215.2,714" fill="none" stroke="#000" stroke-width="0.9" /><circle cx="215.2" cy="249.8" r="1" fill="#fff" stroke="#000" stroke-width="0.65"/><polyline points="220.4,250.5 220.4,714" fill="none" stroke="#000" stroke-width="0.9" /><circle cx="220.4" cy="249.8" r="1" fill="#fff" stroke="#000" stroke-width="0.65"/><polyline points="225.7,250.5 225.7,714" fill="none" stroke="#000" stroke-width="0.9" /><circle cx="225.7" cy="249.8" r="1" fill="#fff" stroke="#000" stroke-width="0.65"/><rect x="321.5" y="382.3" width="75.8" height="118.1" fill="none" stroke="#000" stroke-width="0.9" stroke-dasharray="8.500 1.500"/><text transform="translate(317.2,489.8) rotate(-90) scale(0.8143,1)" font-size="10.5" fill="#000" text-anchor="start">Cable Extension UILFUEL</text><polyline points="329.4,401.7 387.6,401.7" fill="none" stroke="#000" stroke-width="0.7" /><circle cx="329.4" cy="401.7" r="0.9" fill="#fff" stroke="#000" stroke-width="0.55"/><circle cx="387.6" cy="401.7" r="0.9" fill="#fff" stroke="#000" stroke-width="0.55"/><path d="M335 401.7L332.4 400.7L332.4 402.7Z" fill="#000"/><path d="M381 401.7L383.6 400.7L383.6 402.7Z" fill="#000"/><text transform="translate(334.3,400.2) rotate(-90)" font-size="2.85" fill="#000" stroke="#000" stroke-width=".09">B87_A:2</text><text transform="translate(383,400.2) rotate(-90)" font-size="2.85" fill="#000" stroke="#000" stroke-width=".09">B87_B:2</text><text transform="translate(358,398.7) rotate(-90)" font-size="2.85" fill="#000" stroke="#000" stroke-width=".09">0.5OG</text><polyline points="329.4,417.4 387.6,417.4" fill="none" stroke="#000" stroke-width="0.7" /><circle cx="329.4" cy="417.4" r="0.9" fill="#fff" stroke="#000" stroke-width="0.55"/><circle cx="387.6" cy="417.4" r="0.9" fill="#fff" stroke="#000" stroke-width="0.55"/><path d="M335 417.4L332.4 416.4L332.4 418.4Z" fill="#000"/><path d="M381 417.4L383.6 416.4L383.6 418.4Z" fill="#000"/><text transform="translate(332,415.9) rotate(-90)" font-size="2.85" fill="#000" stroke="#000" stroke-width=".09">B87_A:1</text><text transform="translate(380.5,415.9) rotate(-90)" font-size="2.85" fill="#000" stroke="#000" stroke-width=".09">B87_B:1</text><text transform="translate(358,414.4) rotate(-90)" font-size="2.85" fill="#000" stroke="#000" stroke-width=".09">1.0W</text><polyline points="329.4,438.2 387.6,438.2" fill="none" stroke="#000" stroke-width="0.7" /><circle cx="329.4" cy="438.2" r="0.9" fill="#fff" stroke="#000" stroke-width="0.55"/><circle cx="387.6" cy="438.2" r="0.9" fill="#fff" stroke="#000" stroke-width="0.55"/><path d="M335 438.2L332.4 437.2L332.4 439.2Z" fill="#000"/><path d="M381 438.2L383.6 437.2L383.6 439.2Z" fill="#000"/><text transform="translate(334.3,436.7) rotate(-90)" font-size="2.85" fill="#000" stroke="#000" stroke-width=".09">B89_A:2</text><text transform="translate(383,436.7) rotate(-90)" font-size="2.85" fill="#000" stroke="#000" stroke-width=".09">B89_B:2</text><text transform="translate(358,435.2) rotate(-90)" font-size="2.85" fill="#000" stroke="#000" stroke-width=".09">0.5Y</text><polyline points="329.4,453.4 387.6,453.4" fill="none" stroke="#000" stroke-width="0.7" /><circle cx="329.4" cy="453.4" r="0.9" fill="#fff" stroke="#000" stroke-width="0.55"/><circle cx="387.6" cy="453.4" r="0.9" fill="#fff" stroke="#000" stroke-width="0.55"/><path d="M335 453.4L332.4 452.4L332.4 454.4Z" fill="#000"/><path d="M381 453.4L383.6 452.4L383.6 454.4Z" fill="#000"/><text transform="translate(332,451.9) rotate(-90)" font-size="2.85" fill="#000" stroke="#000" stroke-width=".09">B89_A:1</text><text transform="translate(380.5,451.9) rotate(-90)" font-size="2.85" fill="#000" stroke="#000" stroke-width=".09">B89_B:1</text><text transform="translate(358,450.4) rotate(-90)" font-size="2.85" fill="#000" stroke="#000" stroke-width=".09">0.5R/W</text><polyline points="329.4,474.6 387.6,474.6" fill="none" stroke="#000" stroke-width="0.7" /><circle cx="329.4" cy="474.6" r="0.9" fill="#fff" stroke="#000" stroke-width="0.55"/><circle cx="387.6" cy="474.6" r="0.9" fill="#fff" stroke="#000" stroke-width="0.55"/><path d="M335 474.6L332.4 473.6L332.4 475.6Z" fill="#000"/><path d="M381 474.6L383.6 473.6L383.6 475.6Z" fill="#000"/><text transform="translate(334.3,473.1) rotate(-90)" font-size="2.85" fill="#000" stroke="#000" stroke-width=".09">B26_A:2</text><text transform="translate(383,473.1) rotate(-90)" font-size="2.85" fill="#000" stroke="#000" stroke-width=".09">B26_B:2</text><text transform="translate(358,471.6) rotate(-90)" font-size="2.85" fill="#000" stroke="#000" stroke-width=".09">0.5N</text><polyline points="329.4,490 387.6,490" fill="none" stroke="#000" stroke-width="0.7" /><circle cx="329.4" cy="490" r="0.9" fill="#fff" stroke="#000" stroke-width="0.55"/><circle cx="387.6" cy="490" r="0.9" fill="#fff" stroke="#000" stroke-width="0.55"/><path d="M335 490L332.4 489L332.4 491Z" fill="#000"/><path d="M381 490L383.6 489L383.6 491Z" fill="#000"/><text transform="translate(332,488.5) rotate(-90)" font-size="2.85" fill="#000" stroke="#000" stroke-width=".09">B26_A:1</text><text transform="translate(380.5,488.5) rotate(-90)" font-size="2.85" fill="#000" stroke="#000" stroke-width=".09">B26_B:1</text><text transform="translate(358,487) rotate(-90)" font-size="2.85" fill="#000" stroke="#000" stroke-width=".09">0.5N</text><polyline points="215.2,568.5 304.5,568.5" fill="none" stroke="#000" stroke-width="0.8" /><rect x="244" y="566" width="9.8" height="5" fill="#fff" stroke="#000" stroke-width="0.7"/><polyline points="244,568.5 253.8,568.5" fill="none" stroke="#000" stroke-width="0.6" /><circle cx="242.1" cy="568.5" r="1.05" fill="#fff" stroke="#000" stroke-width="0.65"/><circle cx="255.7" cy="568.5" r="1.05" fill="#fff" stroke="#000" stroke-width="0.65"/><text transform="translate(251,563.8) rotate(-90)" font-size="5.6" fill="#000" text-anchor="start" stroke="#000" stroke-width=".12">F19</text><text transform="translate(251,580) rotate(-90)" font-size="3.42" fill="#000" stroke="#000" stroke-width=".09">25A</text><circle cx="304.5" cy="568.5" r="1" fill="#fff" stroke="#000" stroke-width="0.65"/><polyline points="305,568 313,563" fill="none" stroke="#000" stroke-width="0.8" /><circle cx="313.6" cy="568.5" r="1" fill="#fff" stroke="#000" stroke-width="0.65"/><circle cx="313.8" cy="562.6" r="0.8" fill="#000"/><text transform="translate(304.5,575) rotate(-90)" font-size="2.736" fill="#000" stroke="#000" stroke-width=".09">30</text><text transform="translate(316.5,575) rotate(-90)" font-size="2.736" fill="#000" stroke="#000" stroke-width=".09">87</text><text transform="translate(316.5,562) rotate(-90)" font-size="2.736" fill="#000" stroke="#000" stroke-width=".09">87A</text><polyline points="314.5,568.5 420.4,568.5" fill="none" stroke="#000" stroke-width="0.7" /><polyline points="314.5,568.5 330,568.5" fill="none" stroke="#000" stroke-width="1" /><rect x="307" y="569.5" width="3.4" height="9.8" fill="#aaa" stroke="#888" stroke-width="0.3"/><circle cx="335" cy="568.5" r="0.9" fill="#000"/><circle cx="371.7" cy="568.5" r="0.9" fill="#000"/><text transform="translate(334,566.5) rotate(-90)" font-size="2.85" fill="#000" stroke="#000" stroke-width=".09">BROWN/2</text><text transform="translate(351.5,566.5) rotate(-90)" font-size="2.85" fill="#000" stroke="#000" stroke-width=".09">1.5N</text><text transform="translate(372,566.5) rotate(-90)" font-size="2.85" fill="#000" stroke="#000" stroke-width=".09">2WT2</text><text transform="translate(395,566.5) rotate(-90)" font-size="2.85" fill="#000" stroke="#000" stroke-width=".09">1.5B</text><circle cx="420.4" cy="568.5" r="1.05" fill="#fff" stroke="#000" stroke-width="0.65"/><text transform="translate(419,566) rotate(-90)" font-size="2.85" fill="#000" stroke="#000" stroke-width=".09">1</text><polyline points="421.4,568.5 428.2,568.5" fill="none" stroke="#000" stroke-width="0.7" /><rect x="428.2" y="560.3" width="29.9" height="16.7" fill="none" stroke="#000" stroke-width="0.7"/><polyline points="428.2,576 458.1,576" fill="none" stroke="#000" stroke-width="0.5" /><polyline points="428.2,568.5 430.5,568.5 430.5,562.4 434.2,562.4 434.2,574.4 439.1,574.4 439.1,562.4 443.5,562.4 443.5,574.4 447.7,574.4 447.7,562.4 451.8,562.4 451.8,574.4 455.9,574.4 455.9,568.5 458.1,568.5" fill="none" stroke="#000" stroke-width="0.7" /><polyline points="458.1,568.5 512,568.5" fill="none" stroke="#000" stroke-width="0.7" /><circle cx="465.1" cy="568.5" r="1.05" fill="#fff" stroke="#000" stroke-width="0.65"/><text transform="translate(467,566) rotate(-90)" font-size="2.85" fill="#000" stroke="#000" stroke-width=".09">2</text><text transform="translate(489,566.5) rotate(-90)" font-size="2.85" fill="#000" stroke="#000" stroke-width=".09">2.5P</text><path d="M513.9 568.5L510.3 567.3L510.3 569.7Z" fill="#000"/><text transform="translate(517.5,573) rotate(-90)" font-size="2.85" fill="#000" stroke="#000" stroke-width=".09">X:P</text><text transform="translate(520.5,574) rotate(-90)" font-size="2.85" fill="#000" stroke="#000" stroke-width=".09">ZA:2:B</text><text transform="translate(445.8,590.6) rotate(-90)" font-size="5.6" fill="#000" text-anchor="start" stroke="#000" stroke-width=".12">R09</text><polyline points="288,584.2 305.5,584.2" fill="none" stroke="#000" stroke-width="0.8" /><polyline points="312.6,584.2 368.5,584.2" fill="none" stroke="#000" stroke-width="0.7" /><polyline points="312.6,584.2 330,584.2" fill="none" stroke="#000" stroke-width="1" /><rect x="305.5" y="579.3" width="7.1" height="10.3" fill="#fff" stroke="#000" stroke-width="0.8"/><polyline points="305.5,589.6 312.6,579.3" fill="none" stroke="#000" stroke-width="0.7" /><circle cx="304.7" cy="584.2" r="0.9" fill="#fff" stroke="#000" stroke-width="0.55"/><circle cx="313.4" cy="584.2" r="0.9" fill="#fff" stroke="#000" stroke-width="0.55"/><text transform="translate(304,590.5) rotate(-90)" font-size="2.736" fill="#000" stroke="#000" stroke-width=".09">86</text><text transform="translate(316.5,590.5) rotate(-90)" font-size="2.736" fill="#000" stroke="#000" stroke-width=".09">85</text><circle cx="335" cy="584.2" r="0.9" fill="#000"/><path d="M371.7 584.2L368.1 583L368.1 585.4Z" fill="#000"/><text transform="translate(335.5,603) rotate(-90)" font-size="2.85" fill="#000" stroke="#000" stroke-width=".09">VIOLET/0.4</text><text transform="translate(351.5,582) rotate(-90)" font-size="2.85" fill="#000" stroke="#000" stroke-width=".09">1.5N</text><text transform="translate(376,589) rotate(-90)" font-size="2.85" fill="#000" stroke="#000" stroke-width=".09">X342</text><text transform="translate(379,590) rotate(-90)" font-size="2.85" fill="#000" stroke="#000" stroke-width=".09">ZA:2:D</text><text transform="translate(312.3,605) rotate(-90)" font-size="5.6" fill="#000" text-anchor="start" stroke="#000" stroke-width=".12">K41</text><polyline points="220.4,610.2 288,610.2" fill="none" stroke="#000" stroke-width="0.8" /><rect x="244" y="607.7" width="9.8" height="5" fill="#fff" stroke="#000" stroke-width="0.7"/><polyline points="244,610.2 253.8,610.2" fill="none" stroke="#000" stroke-width="0.6" /><circle cx="242.1" cy="610.2" r="1.05" fill="#fff" stroke="#000" stroke-width="0.65"/><circle cx="255.7" cy="610.2" r="1.05" fill="#fff" stroke="#000" stroke-width="0.65"/><text transform="translate(251,604.8) rotate(-90)" font-size="5.6" fill="#000" text-anchor="start" stroke="#000" stroke-width=".12">F46</text><text transform="translate(251,621) rotate(-90)" font-size="3.42" fill="#000" stroke="#000" stroke-width=".09">10A</text><polyline points="288,584.2 288,636.3" fill="none" stroke="#000" stroke-width="0.9" /><polyline points="288,636.3 308,636.3" fill="none" stroke="#000" stroke-width="0.9" /><path d="M305.5 636.3L302.7 635.3L302.7 637.3Z" fill="#000"/><circle cx="309" cy="636.3" r="0.9" fill="#fff" stroke="#000" stroke-width="0.55"/><text transform="translate(303.5,656) rotate(-90)" font-size="2.85" fill="#000" stroke="#000" stroke-width=".09">VIOLET/0.5</text><polyline points="735,714 735,159 1172.3,159 1172.3,714" fill="none" stroke="#bcbcbc" stroke-width="1" /><polyline points="746,714 746,170.5 1161.3,170.5 1161.3,714" fill="none" stroke="#bcbcbc" stroke-width="1" /><polyline points="831.6,159 831.6,170.5" fill="none" stroke="#bcbcbc" stroke-width="1" /><polyline points="917.3,159 917.3,170.5" fill="none" stroke="#bcbcbc" stroke-width="1" /><polyline points="1003.4,159 1003.4,170.5" fill="none" stroke="#bcbcbc" stroke-width="1" /><polyline points="1088.3,159 1088.3,170.5" fill="none" stroke="#bcbcbc" stroke-width="1" /><text transform="translate(792.4,168.2) rotate(-90)" font-size="10" fill="#000" text-anchor="start">A</text><text transform="translate(878.4,168.2) rotate(-90)" font-size="10" fill="#000" text-anchor="start">B</text><text transform="translate(963.6,168.2) rotate(-90)" font-size="10" fill="#000" text-anchor="start">C</text><text transform="translate(1049.1,168.2) rotate(-90)" font-size="10" fill="#000" text-anchor="start">D</text><text transform="translate(1134.6,168.2) rotate(-90)" font-size="10" fill="#000" text-anchor="start">E</text><polyline points="735,292.7 746,292.7" fill="none" stroke="#bcbcbc" stroke-width="1" /><polyline points="735,415.3 746,415.3" fill="none" stroke="#bcbcbc" stroke-width="1" /><polyline points="735,537.5 746,537.5" fill="none" stroke="#bcbcbc" stroke-width="1" /><polyline points="735,659.6 746,659.6" fill="none" stroke="#bcbcbc" stroke-width="1" /><polyline points="1161.3,276.7 1172.3,276.7" fill="none" stroke="#bcbcbc" stroke-width="1" /><polyline points="1161.3,403.2 1172.3,403.2" fill="none" stroke="#bcbcbc" stroke-width="1" /><polyline points="1161.3,529.3 1172.3,529.3" fill="none" stroke="#bcbcbc" stroke-width="1" /><polyline points="1161.3,656.5 1172.3,656.5" fill="none" stroke="#bcbcbc" stroke-width="1" /><text transform="translate(744.4,233.7) rotate(-90)" font-size="9" fill="#000" text-anchor="start">4</text><text transform="translate(744.4,356.3) rotate(-90)" font-size="9" fill="#000" text-anchor="start">3</text><text transform="translate(744.4,479.1) rotate(-90)" font-size="9" fill="#000" text-anchor="start">2</text><text transform="translate(744.4,601.7) rotate(-90)" font-size="9" fill="#000" text-anchor="start">1</text><text transform="translate(1170.6,216) rotate(-90)" font-size="9" fill="#000" text-anchor="start">4</text><text transform="translate(1170.6,342.9) rotate(-90)" font-size="9" fill="#000" text-anchor="start">3</text><text transform="translate(1170.6,468.5) rotate(-90)" font-size="9" fill="#000" text-anchor="start">2</text><text transform="translate(1170.6,595.9) rotate(-90)" font-size="9" fill="#000" text-anchor="start">1</text><text transform="translate(760.5,406.5) rotate(-90)" font-size="9" fill="#000" text-anchor="start" letter-spacing="-0.088">WIRING DIAGRAM NA</text><text transform="translate(760.5,712) rotate(-90)" font-size="9" fill="#000" text-anchor="start" letter-spacing="-0.149">UNIT (STD. VERSION)</text><polyline points="768.9,246.5 768.9,714" fill="none" stroke="#000" stroke-width="0.9" /><circle cx="768.9" cy="245.7" r="1" fill="#fff" stroke="#000" stroke-width="0.65"/><polyline points="774.3,246.5 774.3,714" fill="none" stroke="#000" stroke-width="0.9" /><circle cx="774.3" cy="245.7" r="1" fill="#fff" stroke="#000" stroke-width="0.65"/><polyline points="779.5,246.5 779.5,714" fill="none" stroke="#000" stroke-width="0.9" /><circle cx="779.5" cy="245.7" r="1" fill="#fff" stroke="#000" stroke-width="0.65"/><polyline points="784.7,246.5 784.7,714" fill="none" stroke="#000" stroke-width="0.9" /><circle cx="784.7" cy="245.7" r="1" fill="#fff" stroke="#000" stroke-width="0.65"/><polyline points="891.4,714 891.4,257.1 934.8,257.1 934.8,714" fill="none" stroke="#000" stroke-width="0.9" /><rect x="888.7" y="275.4" width="2.4" height="2.4" fill="#fff" stroke="#000" stroke-width="0.85"/><text transform="translate(896.4,278.6) rotate(-90)" font-size="2.964" fill="#000" stroke="#000" stroke-width=".09">E7</text><rect x="888.7" y="291.2" width="2.4" height="2.4" fill="#fff" stroke="#000" stroke-width="0.85"/><text transform="translate(896.4,294.4) rotate(-90)" font-size="2.964" fill="#000" stroke="#000" stroke-width=".09">F4</text><rect x="888.7" y="306.6" width="2.4" height="2.4" fill="#fff" stroke="#000" stroke-width="0.85"/><text transform="translate(896.4,309.8) rotate(-90)" font-size="2.964" fill="#000" stroke="#000" stroke-width=".09">E1</text><rect x="888.7" y="322.2" width="2.4" height="2.4" fill="#fff" stroke="#000" stroke-width="0.85"/><text transform="translate(896.4,325.4) rotate(-90)" font-size="2.964" fill="#000" stroke="#000" stroke-width=".09">A9</text><rect x="888.7" y="343.2" width="2.4" height="2.4" fill="#fff" stroke="#000" stroke-width="0.85"/><text transform="translate(896.4,346.4) rotate(-90)" font-size="2.964" fill="#000" stroke="#000" stroke-width=".09">D2</text><rect x="888.7" y="358.3" width="2.4" height="2.4" fill="#fff" stroke="#000" stroke-width="0.85"/><text transform="translate(896.4,361.5) rotate(-90)" font-size="2.964" fill="#000" stroke="#000" stroke-width=".09">D1</text><circle cx="935.9" cy="276.4" r="1.05" fill="#fff" stroke="#000" stroke-width="0.65"/><text transform="translate(931.3,278.4) rotate(-90)" font-size="2.964" fill="#000" stroke="#000" stroke-width=".09">G7</text><polyline points="936.8,276.4 1019,276.4" fill="none" stroke="#000" stroke-width="0.7" /><path d="M1021 276.4L1017.4 275.2L1017.4 277.6Z" fill="#000"/><text transform="translate(947.5,274.9) rotate(-90)" font-size="2.85" fill="#000" stroke="#000" stroke-width=".09">0.5OR</text><text transform="translate(999,274.9) rotate(-90)" font-size="2.85" fill="#000" stroke="#000" stroke-width=".09">0.5OR</text><circle cx="979.1" cy="276.4" r="1.3" fill="#000"/><text transform="translate(980.1,274.4) rotate(-90)" font-size="2.85" fill="#000" stroke="#000" stroke-width=".09">ED:13</text><text transform="translate(1024.6,281.9) rotate(-90)" font-size="2.85" fill="#000" stroke="#000" stroke-width=".09">KT07:AB3</text><text transform="translate(1028.2,282.9) rotate(-90)" font-size="2.85" fill="#000" stroke="#000" stroke-width=".09">BA:9:E</text><rect x="934.8" y="286" width="3" height="2.400" fill="#000"/><text transform="translate(931.3,289.2) rotate(-90)" font-size="2.964" fill="#000" stroke="#000" stroke-width=".09">G6</text><circle cx="935.9" cy="297.5" r="1.05" fill="#fff" stroke="#000" stroke-width="0.65"/><text transform="translate(931.3,299.5) rotate(-90)" font-size="2.964" fill="#000" stroke="#000" stroke-width=".09">G5</text><polyline points="936.8,297.5 1035.8,297.5" fill="none" stroke="#000" stroke-width="0.7" /><circle cx="999.8" cy="297.5" r="1.3" fill="#000"/><text transform="translate(1000.5,308) rotate(-90)" font-size="2.85" fill="#000" stroke="#000" stroke-width=".09">EN:F4</text><text transform="translate(966.5,296) rotate(-90)" font-size="2.85" fill="#000" stroke="#000" stroke-width=".09">0.5BL/Y</text><text transform="translate(1017,296) rotate(-90)" font-size="2.85" fill="#000" stroke="#000" stroke-width=".09">0.5BL/Y</text><circle cx="1036.7" cy="297.5" r="1" fill="#fff" stroke="#000" stroke-width="0.65"/><circle cx="1045.3" cy="297.5" r="1" fill="#fff" stroke="#000" stroke-width="0.65"/><polyline points="1037.3,298 1044.8,300.2" fill="none" stroke="#000" stroke-width="0.7" /><polyline points="1041,299.5 1041,305" fill="none" stroke="#000" stroke-width="0.8" /><polyline points="1039.5,302.3 1043.5,302.3" fill="none" stroke="#000" stroke-width="0.8" /><rect x="1038.3" y="305" width="5.4" height="5.2" fill="#fff" stroke="#000" stroke-width="0.8"/><text transform="translate(1036,295.5) rotate(-90)" font-size="2.736" fill="#000" stroke="#000" stroke-width=".09">1</text><text transform="translate(1046.5,296) rotate(-90)" font-size="2.736" fill="#000" stroke="#000" stroke-width=".09">3</text><text transform="translate(1037.2,313.6) rotate(-90)" font-size="6" fill="#000" text-anchor="start" letter-spacing="-0.203" stroke="#000" stroke-width=".12">B133</text><polyline points="1046.2,297.5 1097,297.5" fill="none" stroke="#000" stroke-width="0.7" /><path d="M1099.3 297.5L1095.7 296.3L1095.7 298.7Z" fill="#000"/><text transform="translate(1070.5,296) rotate(-90)" font-size="2.85" fill="#000" stroke="#000" stroke-width=".09">0.5R</text><text transform="translate(1102.9,303) rotate(-90)" font-size="2.85" fill="#000" stroke="#000" stroke-width=".09">X3P</text><text transform="translate(1106.5,304) rotate(-90)" font-size="2.85" fill="#000" stroke="#000" stroke-width=".09">ZA:2:D</text><rect x="934.8" y="306.6" width="3" height="2.400" fill="#000"/><text transform="translate(931.3,309.8) rotate(-90)" font-size="2.964" fill="#000" stroke="#000" stroke-width=".09">G3</text><rect x="934.8" y="317.2" width="3" height="2.400" fill="#000"/><text transform="translate(931.3,320.4) rotate(-90)" font-size="2.964" fill="#000" stroke="#000" stroke-width=".09">G6</text><circle cx="935.9" cy="328.5" r="0.8" fill="#000"/><text transform="translate(931.3,330.5) rotate(-90)" font-size="2.964" fill="#000" stroke="#000" stroke-width=".09">G4</text><polyline points="936.8,328.5 1019,328.5" fill="none" stroke="#000" stroke-width="0.7" /><path d="M1021 328.5L1017.4 327.3L1017.4 329.7Z" fill="#000"/><text transform="translate(945.5,327) rotate(-90)" font-size="2.85" fill="#000" stroke="#000" stroke-width=".09">0.5GN/Y</text><text transform="translate(1003.5,327) rotate(-90)" font-size="2.85" fill="#000" stroke="#000" stroke-width=".09">1WN/Y</text><circle cx="973.5" cy="328.5" r="1.3" fill="#000"/><text transform="translate(974.5,326.5) rotate(-90)" font-size="2.85" fill="#000" stroke="#000" stroke-width=".09">ED:7</text><text transform="translate(1024.6,334) rotate(-90)" font-size="2.85" fill="#000" stroke="#000" stroke-width=".09">AU7:A5</text><text transform="translate(1028.2,335) rotate(-90)" font-size="2.85" fill="#000" stroke="#000" stroke-width=".09">BA:9:E</text><rect x="934.8" y="337.7" width="3" height="2.400" fill="#000"/><text transform="translate(931.3,340.9) rotate(-90)" font-size="2.964" fill="#000" stroke="#000" stroke-width=".09">F6</text><circle cx="935.9" cy="354.8" r="0.8" fill="#000"/><text transform="translate(931.3,356.8) rotate(-90)" font-size="2.964" fill="#000" stroke="#000" stroke-width=".09">F5</text><polyline points="936.8,354.8 988,354.8" fill="none" stroke="#000" stroke-width="0.7" /><path d="M990 354.8L986.4 353.6L986.4 356Z" fill="#000"/><text transform="translate(954.5,353.3) rotate(-90)" font-size="2.85" fill="#000" stroke="#000" stroke-width=".09">0.5GB</text><text transform="translate(993.6,360.3) rotate(-90)" font-size="2.85" fill="#000" stroke="#000" stroke-width=".09">A3:L:D9</text><text transform="translate(997.2,361.3) rotate(-90)" font-size="2.85" fill="#000" stroke="#000" stroke-width=".09">ME:9:B</text><circle cx="935.9" cy="365.4" r="1.05" fill="#fff" stroke="#000" stroke-width="0.65"/><text transform="translate(931.3,367.4) rotate(-90)" font-size="2.964" fill="#000" stroke="#000" stroke-width=".09">E4</text><polyline points="936.8,365.4 972.1,365.4" fill="none" stroke="#000" stroke-width="0.7" /><path d="M974.1 365.4L970.5 364.2L970.5 366.6Z" fill="#000"/><text transform="translate(945.5,363.9) rotate(-90)" font-size="2.85" fill="#000" stroke="#000" stroke-width=".09">0.5W</text><text transform="translate(977.7,370.9) rotate(-90)" font-size="2.85" fill="#000" stroke="#000" stroke-width=".09">XB42</text><text transform="translate(981.3,371.9) rotate(-90)" font-size="2.85" fill="#000" stroke="#000" stroke-width=".09">ZK:2:D</text><circle cx="935.9" cy="375.8" r="0.8" fill="#000"/><text transform="translate(931.3,377.8) rotate(-90)" font-size="2.964" fill="#000" stroke="#000" stroke-width=".09">F1</text><polyline points="936.8,375.8 1045,375.8" fill="none" stroke="#000" stroke-width="0.7" /><path d="M1047 375.8L1043.4 374.6L1043.4 377Z" fill="#000"/><text transform="translate(939,374.3) rotate(-90)" font-size="2.85" fill="#000" stroke="#000" stroke-width=".09">0.5R</text><text transform="translate(1024.5,374.3) rotate(-90)" font-size="2.85" fill="#000" stroke="#000" stroke-width=".09">0.5R</text><circle cx="1004.7" cy="375.8" r="1.3" fill="#000"/><text transform="translate(1005.7,384.8) rotate(-90)" font-size="2.85" fill="#000" stroke="#000" stroke-width=".09">EN:5</text><text transform="translate(1050.6,381.3) rotate(-90)" font-size="2.85" fill="#000" stroke="#000" stroke-width=".09">ME:A1</text><text transform="translate(1054.2,382.3) rotate(-90)" font-size="2.85" fill="#000" stroke="#000" stroke-width=".09">HE:4:C</text><circle cx="935.9" cy="386.2" r="1.05" fill="#fff" stroke="#000" stroke-width="0.65"/><text transform="translate(931.3,388.2) rotate(-90)" font-size="2.964" fill="#000" stroke="#000" stroke-width=".09">E6</text><polyline points="936.8,386.2 972.1,386.2" fill="none" stroke="#000" stroke-width="0.7" /><path d="M974.1 386.2L970.5 385L970.5 387.4Z" fill="#000"/><text transform="translate(939,384.7) rotate(-90)" font-size="2.85" fill="#000" stroke="#000" stroke-width=".09">0.5W/N</text><text transform="translate(945.5,384.7) rotate(-90)" font-size="2.85" fill="#000" stroke="#000" stroke-width=".09">0.5GN/R</text><text transform="translate(977.7,391.7) rotate(-90)" font-size="2.85" fill="#000" stroke="#000" stroke-width=".09">GB/EY8:2</text><text transform="translate(981.3,392.7) rotate(-90)" font-size="2.85" fill="#000" stroke="#000" stroke-width=".09">GX:1:E</text><circle cx="935.9" cy="396.6" r="0.8" fill="#000"/><text transform="translate(931.3,398.6) rotate(-90)" font-size="2.964" fill="#000" stroke="#000" stroke-width=".09">E5</text><polyline points="936.8,396.6 988,396.6" fill="none" stroke="#000" stroke-width="0.7" /><path d="M990 396.6L986.4 395.4L986.4 397.8Z" fill="#000"/><text transform="translate(939,395.1) rotate(-90)" font-size="2.85" fill="#000" stroke="#000" stroke-width=".09">0.5W/N</text><text transform="translate(993.6,402.1) rotate(-90)" font-size="2.85" fill="#000" stroke="#000" stroke-width=".09">YELLOW/0A</text><text transform="translate(997.2,403.1) rotate(-90)" font-size="2.85" fill="#000" stroke="#000" stroke-width=".09">CB:2:C</text><circle cx="935.9" cy="407.2" r="1.05" fill="#fff" stroke="#000" stroke-width="0.65"/><text transform="translate(931.3,409.2) rotate(-90)" font-size="2.964" fill="#000" stroke="#000" stroke-width=".09">C5</text><polyline points="936.8,407.2 972.1,407.2" fill="none" stroke="#000" stroke-width="0.7" /><path d="M974.1 407.2L970.5 406L970.5 408.4Z" fill="#000"/><text transform="translate(945.5,405.7) rotate(-90)" font-size="2.85" fill="#000" stroke="#000" stroke-width=".09">0.5OR</text><text transform="translate(977.7,412.7) rotate(-90)" font-size="2.85" fill="#000" stroke="#000" stroke-width=".09">KD2:K2</text><text transform="translate(981.3,413.7) rotate(-90)" font-size="2.85" fill="#000" stroke="#000" stroke-width=".09">GN:9:E</text><circle cx="935.9" cy="417.4" r="1.05" fill="#fff" stroke="#000" stroke-width="0.65"/><text transform="translate(931.3,419.4) rotate(-90)" font-size="2.964" fill="#000" stroke="#000" stroke-width=".09">E2</text><polyline points="936.8,417.4 988,417.4" fill="none" stroke="#000" stroke-width="0.7" /><path d="M990 417.4L986.4 416.2L986.4 418.6Z" fill="#000"/><text transform="translate(939,415.9) rotate(-90)" font-size="2.85" fill="#000" stroke="#000" stroke-width=".09">0.5GN</text><circle cx="944.5" cy="417.4" r="1.3" fill="#000"/><text transform="translate(993.6,422.9) rotate(-90)" font-size="2.85" fill="#000" stroke="#000" stroke-width=".09">KD1:A4</text><text transform="translate(997.2,423.9) rotate(-90)" font-size="2.85" fill="#000" stroke="#000" stroke-width=".09">GB:5:C</text><circle cx="935.9" cy="427.8" r="0.8" fill="#000"/><text transform="translate(931.3,429.8) rotate(-90)" font-size="2.964" fill="#000" stroke="#000" stroke-width=".09">C7</text><polyline points="936.8,427.8 972.1,427.8" fill="none" stroke="#000" stroke-width="0.7" /><path d="M974.1 427.8L970.5 426.6L970.5 429Z" fill="#000"/><text transform="translate(945.5,426.3) rotate(-90)" font-size="2.85" fill="#000" stroke="#000" stroke-width=".09">0.5BL/Y</text><text transform="translate(977.7,433.3) rotate(-90)" font-size="2.85" fill="#000" stroke="#000" stroke-width=".09">WHITE:B1</text><text transform="translate(981.3,434.3) rotate(-90)" font-size="2.85" fill="#000" stroke="#000" stroke-width=".09">CE:3:B</text><circle cx="935.9" cy="438.4" r="1.05" fill="#fff" stroke="#000" stroke-width="0.65"/><text transform="translate(931.3,440.4) rotate(-90)" font-size="2.964" fill="#000" stroke="#000" stroke-width=".09">B4</text><polyline points="936.8,438.4 1035.6,438.4 1035.6,448.6 942.1,448.6 936.5,458.4" fill="none" stroke="#000" stroke-width="0.7" /><text transform="translate(938,437) rotate(-90)" font-size="2.85" fill="#000" stroke="#000" stroke-width=".09">0.5BL</text><text transform="translate(1008,447.5) rotate(-90)" font-size="2.85" fill="#000" stroke="#000" stroke-width=".09">0.5B</text><path d="M1016.900 434.200V442.600L1022.600 438.400Z" fill="#fff" stroke="#000" stroke-width=".7"/><polyline points="1022.6,434.2 1022.6,442.6" fill="none" stroke="#000" stroke-width="0.8" /><circle cx="1015.3" cy="438.4" r="1" fill="#fff" stroke="#000" stroke-width="0.65"/><circle cx="1024.8" cy="438.4" r="1" fill="#fff" stroke="#000" stroke-width="0.65"/><text transform="translate(1022.2,431) rotate(-90)" font-size="5.5" fill="#000" text-anchor="start" stroke="#000" stroke-width=".12">V01</text><text transform="translate(1020,432.5) rotate(-90)" font-size="3.42" fill="#000" stroke="#000" stroke-width=".09">*</text><circle cx="935.9" cy="458.9" r="1.05" fill="#fff" stroke="#000" stroke-width="0.65"/><text transform="translate(931.3,460.9) rotate(-90)" font-size="2.964" fill="#000" stroke="#000" stroke-width=".09">B6</text><polyline points="936.8,458.9 988,458.9" fill="none" stroke="#000" stroke-width="0.7" /><path d="M990 458.9L986.4 457.7L986.4 460.1Z" fill="#000"/><text transform="translate(945.5,457.4) rotate(-90)" font-size="2.85" fill="#000" stroke="#000" stroke-width=".09">0.75W</text><text transform="translate(993.6,464.4) rotate(-90)" font-size="2.85" fill="#000" stroke="#000" stroke-width=".09">CB:11</text><text transform="translate(997.2,465.4) rotate(-90)" font-size="2.85" fill="#000" stroke="#000" stroke-width=".09">BA:1:D</text><circle cx="935.9" cy="469.8" r="0.8" fill="#000"/><text transform="translate(931.3,471.8) rotate(-90)" font-size="2.964" fill="#000" stroke="#000" stroke-width=".09">A7</text><polyline points="936.8,469.8 1009.5,469.8" fill="none" stroke="#000" stroke-width="0.7" /><circle cx="968.1" cy="469.8" r="1.3" fill="#000"/><text transform="translate(967,466) rotate(-90)" font-size="2.85" fill="#000" stroke="#000" stroke-width=".09">EN:2</text><text transform="translate(938,468.5) rotate(-90)" font-size="2.85" fill="#000" stroke="#000" stroke-width=".09">0.5GN</text><text transform="translate(982.5,468.5) rotate(-90)" font-size="2.85" fill="#000" stroke="#000" stroke-width=".09">0.5GN</text><circle cx="1010.4" cy="469.8" r="1" fill="#fff" stroke="#000" stroke-width="0.65"/><circle cx="1019" cy="469.8" r="1" fill="#fff" stroke="#000" stroke-width="0.65"/><polyline points="1011,470.3 1018.5,472.3" fill="none" stroke="#000" stroke-width="0.7" /><polyline points="1014.7,471.5 1014.7,476" fill="none" stroke="#000" stroke-width="0.8" /><rect x="1012" y="476" width="5.5" height="6" fill="#fff" stroke="#000" stroke-width="0.8"/><polyline points="1012,479 1017.5,479" fill="none" stroke="#000" stroke-width="0.5" /><polyline points="1014.7,476 1014.7,482" fill="none" stroke="#000" stroke-width="0.5" /><text transform="translate(1010,468) rotate(-90)" font-size="2.736" fill="#000" stroke="#000" stroke-width=".09">1</text><text transform="translate(1020.5,468) rotate(-90)" font-size="2.736" fill="#000" stroke="#000" stroke-width=".09">2</text><text transform="translate(1011,486) rotate(-90)" font-size="6" fill="#000" text-anchor="start" letter-spacing="-0.203" stroke="#000" stroke-width=".12">S194</text><polyline points="1020,469.8 1070,469.8" fill="none" stroke="#000" stroke-width="0.7" /><path d="M1072.2 469.8L1068.6 468.6L1068.6 471Z" fill="#000"/><text transform="translate(1035,468.5) rotate(-90)" font-size="2.85" fill="#000" stroke="#000" stroke-width=".09">0.5R</text><text transform="translate(1075.8,475.3) rotate(-90)" font-size="2.85" fill="#000" stroke="#000" stroke-width=".09">X30L</text><text transform="translate(1079.4,476.3) rotate(-90)" font-size="2.85" fill="#000" stroke="#000" stroke-width=".09">ZA:3:N</text><circle cx="935.9" cy="480.1" r="1.05" fill="#fff" stroke="#000" stroke-width="0.65"/><text transform="translate(931.3,482.1) rotate(-90)" font-size="2.964" fill="#000" stroke="#000" stroke-width=".09">C9</text><polyline points="936.8,480.1 988,480.1" fill="none" stroke="#000" stroke-width="0.7" /><path d="M990 480.1L986.4 478.9L986.4 481.3Z" fill="#000"/><text transform="translate(945.5,478.6) rotate(-90)" font-size="2.85" fill="#000" stroke="#000" stroke-width=".09">0.5OR</text><text transform="translate(993.6,485.6) rotate(-90)" font-size="2.85" fill="#000" stroke="#000" stroke-width=".09">WHITE:B4</text><text transform="translate(997.2,486.6) rotate(-90)" font-size="2.85" fill="#000" stroke="#000" stroke-width=".09">CE:2:B</text><circle cx="935.9" cy="495.7" r="0.8" fill="#000"/><text transform="translate(931.3,497.7) rotate(-90)" font-size="2.964" fill="#000" stroke="#000" stroke-width=".09">B6</text><polyline points="935.3,495.7 941.3,490.3 967,490.3" fill="none" stroke="#000" stroke-width="0.7" /><path d="M969.2 490.3L965.6 489.1L965.6 491.5Z" fill="#000"/><text transform="translate(954,489) rotate(-90)" font-size="2.85" fill="#000" stroke="#000" stroke-width=".09">0.5W</text><text transform="translate(972.8,495.8) rotate(-90)" font-size="2.85" fill="#000" stroke="#000" stroke-width=".09">X34C</text><text transform="translate(976.4,496.8) rotate(-90)" font-size="2.85" fill="#000" stroke="#000" stroke-width=".09">ZA:2:D</text><rect x="934.8" y="504.9" width="3" height="2.400" fill="#000"/><text transform="translate(931.3,508.1) rotate(-90)" font-size="2.964" fill="#000" stroke="#000" stroke-width=".09">E2</text><circle cx="935.9" cy="521.7" r="1.05" fill="#fff" stroke="#000" stroke-width="0.65"/><text transform="translate(931.3,523.7) rotate(-90)" font-size="2.964" fill="#000" stroke="#000" stroke-width=".09">B2</text><polyline points="936.8,521.7 988,521.7" fill="none" stroke="#000" stroke-width="0.7" /><path d="M990 521.7L986.4 520.5L986.4 522.9Z" fill="#000"/><text transform="translate(939,520.2) rotate(-90)" font-size="2.85" fill="#000" stroke="#000" stroke-width=".09">0.5GN</text><text transform="translate(993.6,527.2) rotate(-90)" font-size="2.85" fill="#000" stroke="#000" stroke-width=".09">YELLOW:B1</text><text transform="translate(997.2,528.2) rotate(-90)" font-size="2.85" fill="#000" stroke="#000" stroke-width=".09">CE:2:C</text><circle cx="935.9" cy="537.2" r="1.05" fill="#fff" stroke="#000" stroke-width="0.65"/><text transform="translate(931.3,539.2) rotate(-90)" font-size="2.964" fill="#000" stroke="#000" stroke-width=".09">K5</text><polyline points="936.8,537.2 1051.5,537.2 1051.5,547.7 1062.3,547.7" fill="none" stroke="#000" stroke-width="0.7" /><circle cx="979.1" cy="537.2" r="1.3" fill="#000"/><text transform="translate(979,549) rotate(-90)" font-size="2.85" fill="#000" stroke="#000" stroke-width=".09">NO:10</text><text transform="translate(948,536) rotate(-90)" font-size="2.85" fill="#000" stroke="#000" stroke-width=".09">0.5Y</text><text transform="translate(1014,536) rotate(-90)" font-size="2.85" fill="#000" stroke="#000" stroke-width=".09">0.5Y</text><circle cx="1063.2" cy="547.7" r="1" fill="#fff" stroke="#000" stroke-width="0.65"/><circle cx="1071" cy="547.7" r="1" fill="#fff" stroke="#000" stroke-width="0.65"/><polyline points="1064,547.7 1070.2,547.7" fill="none" stroke="#000" stroke-width="1.3" /><polyline points="1067.1,547.7 1067.1,553" fill="none" stroke="#000" stroke-width="0.9" /><rect x="1064.5" y="553" width="5.2" height="5.3" fill="#fff" stroke="#000" stroke-width="0.8"/><text transform="translate(1068.2,557) rotate(-90)" font-size="3.648" fill="#000" stroke="#000" stroke-width=".09">P</text><text transform="translate(1063.2,546.2) rotate(-90)" font-size="2.736" fill="#000" stroke="#000" stroke-width=".09">2</text><text transform="translate(1072.2,546.2) rotate(-90)" font-size="2.736" fill="#000" stroke="#000" stroke-width=".09">1</text><text transform="translate(1061.6,567.6) rotate(-90)" font-size="6.5" fill="#000" text-anchor="start" letter-spacing="0.585" stroke="#000" stroke-width=".12">S191R</text><polyline points="1072,547.7 1101.5,547.7" fill="none" stroke="#000" stroke-width="0.7" /><path d="M1103.9 547.7L1100.3 546.5L1100.3 548.9Z" fill="#000"/><text transform="translate(1085,546.5) rotate(-90)" font-size="2.85" fill="#000" stroke="#000" stroke-width=".09">0.5W</text><text transform="translate(1107.5,553.2) rotate(-90)" font-size="2.85" fill="#000" stroke="#000" stroke-width=".09">X3P</text><text transform="translate(1111.1,554.2) rotate(-90)" font-size="2.85" fill="#000" stroke="#000" stroke-width=".09">ZA:2:9</text><circle cx="935.9" cy="553" r="0.8" fill="#000"/><text transform="translate(931.3,555) rotate(-90)" font-size="2.964" fill="#000" stroke="#000" stroke-width=".09">B3</text><polyline points="935.3,553 942.1,563.5 1040.8,563.5 1040.8,579.3 1062.3,579.3" fill="none" stroke="#000" stroke-width="0.7" /><circle cx="999.8" cy="563.5" r="1.3" fill="#000"/><text transform="translate(999,574) rotate(-90)" font-size="2.85" fill="#000" stroke="#000" stroke-width=".09">AG:3</text><text transform="translate(966.5,562) rotate(-90)" font-size="2.85" fill="#000" stroke="#000" stroke-width=".09">0.5Y</text><text transform="translate(1022,562) rotate(-90)" font-size="2.85" fill="#000" stroke="#000" stroke-width=".09">0.5Y</text><circle cx="1063.2" cy="579.3" r="1" fill="#fff" stroke="#000" stroke-width="0.65"/><circle cx="1071" cy="579.3" r="1" fill="#fff" stroke="#000" stroke-width="0.65"/><polyline points="1064,579.3 1070.2,579.3" fill="none" stroke="#000" stroke-width="1.3" /><polyline points="1067.1,579.3 1067.1,584.6" fill="none" stroke="#000" stroke-width="0.9" /><rect x="1064.5" y="584.6" width="5.2" height="5.3" fill="#fff" stroke="#000" stroke-width="0.8"/><text transform="translate(1068.2,588.6) rotate(-90)" font-size="3.648" fill="#000" stroke="#000" stroke-width=".09">P</text><text transform="translate(1063.2,577.8) rotate(-90)" font-size="2.736" fill="#000" stroke="#000" stroke-width=".09">2</text><text transform="translate(1072.2,577.8) rotate(-90)" font-size="2.736" fill="#000" stroke="#000" stroke-width=".09">1</text><text transform="translate(1061.6,599) rotate(-90)" font-size="6.5" fill="#000" text-anchor="start" letter-spacing="0.730" stroke="#000" stroke-width=".12">S191F</text><polyline points="1072,579.3 1101.5,579.3" fill="none" stroke="#000" stroke-width="0.7" /><path d="M1103.9 579.3L1100.3 578.1L1100.3 580.5Z" fill="#000"/><text transform="translate(1083.5,578) rotate(-90)" font-size="2.85" fill="#000" stroke="#000" stroke-width=".09">0.5W</text><text transform="translate(1107.5,584.8) rotate(-90)" font-size="2.85" fill="#000" stroke="#000" stroke-width=".09">X3P</text><text transform="translate(1111.1,585.8) rotate(-90)" font-size="2.85" fill="#000" stroke="#000" stroke-width=".09">ZA:2:D</text><circle cx="935.9" cy="573.7" r="1.05" fill="#fff" stroke="#000" stroke-width="0.65"/><text transform="translate(931.3,575.7) rotate(-90)" font-size="2.964" fill="#000" stroke="#000" stroke-width=".09">B7</text><polyline points="936.8,573.7 976.7,573.7" fill="none" stroke="#000" stroke-width="0.7" /><path d="M978.7 573.7L975.1 572.5L975.1 574.9Z" fill="#000"/><text transform="translate(939,572.2) rotate(-90)" font-size="2.85" fill="#000" stroke="#000" stroke-width=".09">0.75W</text><text transform="translate(982.3,579.2) rotate(-90)" font-size="2.85" fill="#000" stroke="#000" stroke-width=".09">ED:15</text><text transform="translate(985.9,580.2) rotate(-90)" font-size="2.85" fill="#000" stroke="#000" stroke-width=".09">AA:1:S</text><circle cx="935.9" cy="584.2" r="1.05" fill="#fff" stroke="#000" stroke-width="0.65"/><text transform="translate(931.3,586.2) rotate(-90)" font-size="2.964" fill="#000" stroke="#000" stroke-width=".09">D6</text><polyline points="936.8,584.2 988.5,584.2" fill="none" stroke="#000" stroke-width="0.7" /><circle cx="963.2" cy="584.2" r="1.3" fill="#000"/><text transform="translate(963,595) rotate(-90)" font-size="2.85" fill="#000" stroke="#000" stroke-width=".09">EN:4</text><text transform="translate(939,583) rotate(-90)" font-size="2.85" fill="#000" stroke="#000" stroke-width=".09">0.5OR</text><text transform="translate(974.5,583) rotate(-90)" font-size="2.85" fill="#000" stroke="#000" stroke-width=".09">0.5OR</text><circle cx="989.4" cy="584.2" r="1" fill="#fff" stroke="#000" stroke-width="0.65"/><circle cx="998.2" cy="584.2" r="1" fill="#fff" stroke="#000" stroke-width="0.65"/><polyline points="990.2,584.2 997.4,584.2" fill="none" stroke="#000" stroke-width="1.3" /><polyline points="993.8,584.2 993.8,589.5" fill="none" stroke="#000" stroke-width="0.9" /><rect x="991.5" y="589.5" width="5" height="5.5" fill="#fff" stroke="#000" stroke-width="0.8"/><text transform="translate(995.3,593.8) rotate(-90)" font-size="3.42" fill="#000" stroke="#000" stroke-width=".09">P</text><text transform="translate(989,582.5) rotate(-90)" font-size="2.736" fill="#000" stroke="#000" stroke-width=".09">1</text><text transform="translate(1000,582.5) rotate(-90)" font-size="2.736" fill="#000" stroke="#000" stroke-width=".09">2</text><text transform="translate(989.6,598.5) rotate(-90)" font-size="6" fill="#000" text-anchor="start" letter-spacing="-0.003" stroke="#000" stroke-width=".12">S192</text><polyline points="999,584.2 1022.5,584.2" fill="none" stroke="#000" stroke-width="0.7" /><polyline points="999,584.2 1014,584.2" fill="none" stroke="#000" stroke-width="1.3" /><polyline points="1022.5,581.3 1022.5,587.3" fill="none" stroke="#000" stroke-width="0.9" /><circle cx="935.9" cy="594.3" r="0.8" fill="#000"/><text transform="translate(931.3,596.3) rotate(-90)" font-size="2.964" fill="#000" stroke="#000" stroke-width=".09">F2</text><path d="M935.300 594.300L942.400 599.800H977Q978.400 599.800 978.400 601.200V603.600Q978.400 605 977 605H936.500" fill="none" stroke="#000" stroke-width=".7"/><circle cx="935.9" cy="605" r="1.05" fill="#fff" stroke="#000" stroke-width="0.65"/><text transform="translate(931.3,607) rotate(-90)" font-size="2.964" fill="#000" stroke="#000" stroke-width=".09">D5</text><text transform="translate(945,604) rotate(-90)" font-size="2.85" fill="#000" stroke="#000" stroke-width=".09">0.5Y</text><text transform="translate(952,611.5) rotate(-90)" font-size="2.85" fill="#000" stroke="#000" stroke-width=".09">0.5BN/R</text><circle cx="935.9" cy="615.3" r="0.8" fill="#000"/><text transform="translate(931.3,617.3) rotate(-90)" font-size="2.964" fill="#000" stroke="#000" stroke-width=".09">A1</text><polyline points="936.8,615.3 987,615.3" fill="none" stroke="#000" stroke-width="0.7" /><path d="M989 615.3L985.4 614.1L985.4 616.5Z" fill="#000"/><text transform="translate(939,613.8) rotate(-90)" font-size="2.85" fill="#000" stroke="#000" stroke-width=".09">0.5Y/B</text><text transform="translate(992.6,620.8) rotate(-90)" font-size="2.85" fill="#000" stroke="#000" stroke-width=".09">YELLOW:A13</text><text transform="translate(996.2,621.8) rotate(-90)" font-size="2.85" fill="#000" stroke="#000" stroke-width=".09">AA:9:E</text><circle cx="935.9" cy="625.7" r="1.05" fill="#fff" stroke="#000" stroke-width="0.65"/><text transform="translate(931.3,627.7) rotate(-90)" font-size="2.964" fill="#000" stroke="#000" stroke-width=".09">C1</text><polyline points="936.8,625.7 1004.6,625.7 1004.6,615.3 1022,615.3" fill="none" stroke="#000" stroke-width="0.7" /><circle cx="963" cy="625.7" r="1.3" fill="#000"/><text transform="translate(963,636.5) rotate(-90)" font-size="2.85" fill="#000" stroke="#000" stroke-width=".09">AG:14</text><text transform="translate(939,624.5) rotate(-90)" font-size="2.85" fill="#000" stroke="#000" stroke-width=".09">0.5Y/B</text><text transform="translate(978,624.5) rotate(-90)" font-size="2.85" fill="#000" stroke="#000" stroke-width=".09">0.5Y/B</text><rect x="1022" y="607" width="16.8" height="17.4" fill="#fff" stroke="#000" stroke-width="0.9"/><polyline points="1022,607 1038.8,624.4" fill="none" stroke="#000" stroke-width="0.8" /><circle cx="1022" cy="614" r="0.9" fill="#fff" stroke="#000" stroke-width="0.55"/><circle cx="1038.8" cy="614" r="0.9" fill="#fff" stroke="#000" stroke-width="0.55"/><text transform="translate(1017.7,628.6) rotate(-90) scale(0.8712,1)" font-size="6" fill="#000" text-anchor="start" stroke="#000" stroke-width=".12">B07</text><polyline points="1025.5,616.5 1025.5,621" fill="none" stroke="#000" stroke-width="0.6" /><path d="M1027.500 617.500Q1030 619 1027.500 620.500" fill="none" stroke="#000" stroke-width=".5"/><polyline points="1039.6,615.3 1102,615.3" fill="none" stroke="#000" stroke-width="0.7" /><path d="M1104.3 615.3L1100.7 614.1L1100.7 616.5Z" fill="#000"/><circle cx="1071.3" cy="615.3" r="1.3" fill="#000"/><text transform="translate(1072,626.5) rotate(-90)" font-size="2.85" fill="#000" stroke="#000" stroke-width=".09">AG:14</text><text transform="translate(1050,614) rotate(-90)" font-size="2.85" fill="#000" stroke="#000" stroke-width=".09">0.5R</text><text transform="translate(1086,614) rotate(-90)" font-size="2.85" fill="#000" stroke="#000" stroke-width=".09">0.5R</text><text transform="translate(1107.9,620.8) rotate(-90)" font-size="2.85" fill="#000" stroke="#000" stroke-width=".09">X030</text><text transform="translate(1111.5,621.8) rotate(-90)" font-size="2.85" fill="#000" stroke="#000" stroke-width=".09">ZA:3:9</text><text transform="translate(1021.5,613) rotate(-90)" font-size="2.622" fill="#000" stroke="#000" stroke-width=".09">2</text><text transform="translate(1040.5,613) rotate(-90)" font-size="2.622" fill="#000" stroke="#000" stroke-width=".09">1</text><circle cx="935.9" cy="641.6" r="0.8" fill="#000"/><text transform="translate(931.3,643.6) rotate(-90)" font-size="2.964" fill="#000" stroke="#000" stroke-width=".09">D3</text><polyline points="936.8,641.6 983.5,641.6" fill="none" stroke="#000" stroke-width="0.7" /><polyline points="1004.7,641.6 1058.5,641.6" fill="none" stroke="#000" stroke-width="0.7" /><rect x="985.4" y="638.8" width="17.3" height="5.6" fill="#fff" stroke="#000" stroke-width="0.8"/><circle cx="984.3" cy="641.6" r="1" fill="#fff" stroke="#000" stroke-width="0.65"/><circle cx="1003.8" cy="641.6" r="1" fill="#fff" stroke="#000" stroke-width="0.65"/><text transform="translate(1000.800,639.7) rotate(180)" font-size="5.600" stroke="#000" stroke-width=".12">R16</text><circle cx="963" cy="641.6" r="1.3" fill="#000"/><text transform="translate(963.8,652.5) rotate(-90)" font-size="2.85" fill="#000" stroke="#000" stroke-width=".09">B2:C4</text><circle cx="1019.6" cy="641.6" r="1.3" fill="#000"/><text transform="translate(1020.4,652.5) rotate(-90)" font-size="2.85" fill="#000" stroke="#000" stroke-width=".09">A6:11</text><circle cx="1035.7" cy="641.6" r="1.3" fill="#000"/><text transform="translate(1036.5,652.5) rotate(-90)" font-size="2.85" fill="#000" stroke="#000" stroke-width=".09">AS:9</text><text transform="translate(939,640.5) rotate(-90)" font-size="2.85" fill="#000" stroke="#000" stroke-width=".09">0.5BL</text><text transform="translate(1027.5,640.5) rotate(-90)" font-size="2.85" fill="#000" stroke="#000" stroke-width=".09">0.5BL</text><text transform="translate(1045,640.5) rotate(-90)" font-size="2.85" fill="#000" stroke="#000" stroke-width=".09">0.75BL</text><rect x="1058.5" y="632.5" width="17" height="18.5" fill="#fff" stroke="#000" stroke-width="0.9"/><polyline points="1058.5,651 1075.5,632.5" fill="none" stroke="#000" stroke-width="0.8" /><circle cx="1058.5" cy="641.6" r="0.9" fill="#fff" stroke="#000" stroke-width="0.55"/><circle cx="1075.5" cy="641.6" r="0.9" fill="#fff" stroke="#000" stroke-width="0.55"/><text transform="translate(1056.7,657.8) rotate(-90)" font-size="6" fill="#000" text-anchor="start" letter-spacing="0.006" stroke="#000" stroke-width=".12">B06B</text><text transform="translate(1073.5,649.5) rotate(-90)" font-size="5.6" fill="#000" text-anchor="start" stroke="#000" stroke-width=".12">P</text><polyline points="1076.3,641.6 1102,641.6" fill="none" stroke="#000" stroke-width="0.7" /><path d="M1104.3 641.6L1100.7 640.4L1100.7 642.8Z" fill="#000"/><text transform="translate(1087.5,640.5) rotate(-90)" font-size="2.85" fill="#000" stroke="#000" stroke-width=".09">0.75W</text><text transform="translate(1107.9,647.1) rotate(-90)" font-size="2.85" fill="#000" stroke="#000" stroke-width=".09">X03</text><text transform="translate(1111.5,648.1) rotate(-90)" font-size="2.85" fill="#000" stroke="#000" stroke-width=".09">ZA:2:9</text><text transform="translate(1058,639.5) rotate(-90)" font-size="2.622" fill="#000" stroke="#000" stroke-width=".09">2</text><text transform="translate(1077.5,639.5) rotate(-90)" font-size="2.622" fill="#000" stroke="#000" stroke-width=".09">1</text><circle cx="935.9" cy="657.4" r="1.05" fill="#fff" stroke="#000" stroke-width="0.65"/><text transform="translate(931.3,659.4) rotate(-90)" font-size="2.964" fill="#000" stroke="#000" stroke-width=".09">K3</text><polyline points="936.8,657.4 983.5,657.4" fill="none" stroke="#000" stroke-width="0.7" /><rect x="985.4" y="654.6" width="17.3" height="5.6" fill="#fff" stroke="#000" stroke-width="0.8"/><circle cx="984.3" cy="657.4" r="1" fill="#fff" stroke="#000" stroke-width="0.65"/><circle cx="1003.8" cy="657.4" r="1" fill="#fff" stroke="#000" stroke-width="0.65"/><text transform="translate(1000.800,655.5) rotate(180)" font-size="5.600" stroke="#000" stroke-width=".12">R15</text><polyline points="1004.7,657.4 1045.7,657.4 1045.7,667.4 1058.5,667.4" fill="none" stroke="#000" stroke-width="0.7" /><circle cx="963" cy="657.4" r="1.3" fill="#000"/><text transform="translate(963.8,668) rotate(-90)" font-size="2.85" fill="#000" stroke="#000" stroke-width=".09">ME:7</text><circle cx="1019.6" cy="657.4" r="1.3" fill="#000"/><text transform="translate(1020.4,668) rotate(-90)" font-size="2.85" fill="#000" stroke="#000" stroke-width=".09">A5:1</text><circle cx="1035.7" cy="657.4" r="1.3" fill="#000"/><text transform="translate(1036.5,668) rotate(-90)" font-size="2.85" fill="#000" stroke="#000" stroke-width=".09">AS:2</text><text transform="translate(939,656.3) rotate(-90)" font-size="2.85" fill="#000" stroke="#000" stroke-width=".09">0.5GN</text><text transform="translate(1027.5,656.3) rotate(-90)" font-size="2.85" fill="#000" stroke="#000" stroke-width=".09">0.5GN</text><text transform="translate(1044.5,666) rotate(-90)" font-size="2.85" fill="#000" stroke="#000" stroke-width=".09">0.75GN</text><rect x="1058.5" y="658.3" width="17" height="18.7" fill="#fff" stroke="#000" stroke-width="0.9"/><polyline points="1058.5,677 1075.5,658.3" fill="none" stroke="#000" stroke-width="0.8" /><circle cx="1058.5" cy="667.4" r="0.9" fill="#fff" stroke="#000" stroke-width="0.55"/><circle cx="1075.5" cy="667.4" r="0.9" fill="#fff" stroke="#000" stroke-width="0.55"/><text transform="translate(1056.7,685.3) rotate(-90)" font-size="6" fill="#000" text-anchor="start" letter-spacing="-0.094" stroke="#000" stroke-width=".12">B06A</text><text transform="translate(1073.5,675.5) rotate(-90)" font-size="5.6" fill="#000" text-anchor="start" stroke="#000" stroke-width=".12">P</text><polyline points="1076.3,667.4 1102,667.4" fill="none" stroke="#000" stroke-width="0.7" /><path d="M1104.3 667.4L1100.7 666.2L1100.7 668.6Z" fill="#000"/><text transform="translate(1087.5,666.3) rotate(-90)" font-size="2.85" fill="#000" stroke="#000" stroke-width=".09">0.75W</text><text transform="translate(1107.9,672.9) rotate(-90)" font-size="2.85" fill="#000" stroke="#000" stroke-width=".09">X03</text><text transform="translate(1111.5,673.9) rotate(-90)" font-size="2.85" fill="#000" stroke="#000" stroke-width=".09">ZA:2:9</text><text transform="translate(1058,665.3) rotate(-90)" font-size="2.622" fill="#000" stroke="#000" stroke-width=".09">2</text><text transform="translate(1077.5,665.3) rotate(-90)" font-size="2.622" fill="#000" stroke="#000" stroke-width=".09">1</text><circle cx="935.9" cy="673" r="0.8" fill="#000"/><text transform="translate(931.3,675) rotate(-90)" font-size="2.964" fill="#000" stroke="#000" stroke-width=".09">B1</text><polyline points="936.8,673 1004.6,673 1004.6,693.4 1022,693.4" fill="none" stroke="#000" stroke-width="0.7" /><circle cx="963" cy="673" r="1.3" fill="#000"/><text transform="translate(963,684.5) rotate(-90)" font-size="2.85" fill="#000" stroke="#000" stroke-width=".09">EN:13</text><text transform="translate(939,672) rotate(-90)" font-size="2.85" fill="#000" stroke="#000" stroke-width=".09">0.5Y/R</text><text transform="translate(988,672) rotate(-90)" font-size="2.85" fill="#000" stroke="#000" stroke-width=".09">1.0Y/R</text><rect x="1022" y="684.3" width="16.8" height="19.2" fill="#fff" stroke="#000" stroke-width="0.9"/><polyline points="1022,684.3 1038.8,703.5" fill="none" stroke="#000" stroke-width="0.8" /><circle cx="1022" cy="692" r="0.9" fill="#fff" stroke="#000" stroke-width="0.55"/><circle cx="1038.8" cy="692" r="0.9" fill="#fff" stroke="#000" stroke-width="0.55"/><text transform="translate(1017.4,708) rotate(-90) scale(0.8712,1)" font-size="6" fill="#000" text-anchor="start" stroke="#000" stroke-width=".12">B21</text><ellipse cx="1027.200" cy="698.300" rx="1.800" ry="1.200" fill="none" stroke="#000" stroke-width=".6"/><polyline points="1027.2,697.1 1027.2,699.5" fill="none" stroke="#000" stroke-width="0.5" /><polyline points="1039.6,693.4 1102,693.4" fill="none" stroke="#000" stroke-width="0.7" /><path d="M1104.3 693.4L1100.7 692.2L1100.7 694.6Z" fill="#000"/><text transform="translate(1067,692.3) rotate(-90)" font-size="2.85" fill="#000" stroke="#000" stroke-width=".09">0.5R</text><text transform="translate(1107.9,698.9) rotate(-90)" font-size="2.85" fill="#000" stroke="#000" stroke-width=".09">X30L</text><text transform="translate(1111.5,699.9) rotate(-90)" font-size="2.85" fill="#000" stroke="#000" stroke-width=".09">ZA:3:9</text><text transform="translate(1021.5,691) rotate(-90)" font-size="2.622" fill="#000" stroke="#000" stroke-width=".09">2</text><text transform="translate(1040.5,691) rotate(-90)" font-size="2.622" fill="#000" stroke="#000" stroke-width=".09">1</text><circle cx="935.9" cy="704.4" r="1.05" fill="#fff" stroke="#000" stroke-width="0.65"/><text transform="translate(931.3,706.4) rotate(-90)" font-size="2.964" fill="#000" stroke="#000" stroke-width=".09">B4</text><polyline points="936.8,704.4 987,704.4" fill="none" stroke="#000" stroke-width="0.7" /><path d="M989 704.4L985.4 703.2L985.4 705.6Z" fill="#000"/><text transform="translate(939,702.9) rotate(-90)" font-size="2.85" fill="#000" stroke="#000" stroke-width=".09">0.5BL</text><text transform="translate(992.6,709.9) rotate(-90)" font-size="2.85" fill="#000" stroke="#000" stroke-width=".09">X30L</text><text transform="translate(996.2,710.9) rotate(-90)" font-size="2.85" fill="#000" stroke="#000" stroke-width=".09">ZA:3:N</text><circle cx="935.9" cy="712.5" r="1.05" fill="#fff" stroke="#000" stroke-width="0.65"/><text transform="translate(931.3,714.5) rotate(-90)" font-size="2.964" fill="#000" stroke="#000" stroke-width=".09">B5</text><text transform="translate(938,718) rotate(-90)" font-size="2.85" fill="#000" stroke="#000" stroke-width=".09">0.5P</text><rect x="888.7" y="406" width="2.4" height="2.4" fill="#fff" stroke="#000" stroke-width="0.85"/><text transform="translate(896.4,409.2) rotate(-90)" font-size="2.964" fill="#000" stroke="#000" stroke-width=".09">A8</text><polyline points="801.5,407.2 889.4,407.2" fill="none" stroke="#777" stroke-width="1.1" /><path d="M799.8 407.2L803.4 406L803.4 408.4Z" fill="#000"/><circle cx="827.2" cy="407.2" r="1" fill="#fff" stroke="#000" stroke-width="0.65"/><circle cx="835.9" cy="407.2" r="1" fill="#fff" stroke="#000" stroke-width="0.65"/><polyline points="828,407.2 835,407.2" fill="none" stroke="#000" stroke-width="1.2" /><polyline points="831.5,407.2 831.5,412" fill="none" stroke="#000" stroke-width="0.9" /><rect x="828.6" y="412" width="6.2" height="5.2" fill="#fff" stroke="#000" stroke-width="0.8"/><text transform="translate(833.2,416.2) rotate(-90)" font-size="3.42" fill="#000" stroke="#000" stroke-width=".09">P</text><text transform="translate(826.5,405.5) rotate(-90)" font-size="2.736" fill="#000" stroke="#000" stroke-width=".09">1</text><text transform="translate(837.5,405.5) rotate(-90)" font-size="2.736" fill="#000" stroke="#000" stroke-width=".09">2</text><text transform="translate(833.2,402.8) rotate(-90) scale(0.8899,1)" font-size="6" fill="#000" text-anchor="start" stroke="#000" stroke-width=".12">S43</text><circle cx="852.2" cy="407.2" r="1.3" fill="#000"/><text transform="translate(852.5,405) rotate(-90)" font-size="2.85" fill="#000" stroke="#000" stroke-width=".09">NO:12</text><text transform="translate(815.5,405.7) rotate(-90)" font-size="2.85" fill="#000" stroke="#000" stroke-width=".09">0.5R</text><text transform="translate(842.5,405.7) rotate(-90)" font-size="2.85" fill="#000" stroke="#000" stroke-width=".09">0.5R</text><text transform="translate(871,405.7) rotate(-90)" font-size="2.85" fill="#000" stroke="#000" stroke-width=".09">0.5OR</text><text transform="translate(794.6,413.7) rotate(-90)" font-size="2.85" fill="#000" stroke="#000" stroke-width=".09">ZA:2:D</text><text transform="translate(798.2,412.7) rotate(-90)" font-size="2.85" fill="#000" stroke="#000" stroke-width=".09">X3O</text><polyline points="891.4,407.2 884.7,417.2 884.7,458.9 835.1,458.9" fill="none" stroke="#000" stroke-width="0.7" /><text transform="translate(868.5,457.5) rotate(-90)" font-size="2.85" fill="#000" stroke="#000" stroke-width=".09">0.5GN</text><polyline points="802,443.4 826.3,443.4" fill="none" stroke="#000" stroke-width="0.7" /><path d="M799.8 443.4L803.4 442.2L803.4 444.6Z" fill="#000"/><text transform="translate(794.6,449.9) rotate(-90)" font-size="2.85" fill="#000" stroke="#000" stroke-width=".09">BA:1:A</text><text transform="translate(798.2,448.9) rotate(-90)" font-size="2.85" fill="#000" stroke="#000" stroke-width=".09">XB82/C2</text><circle cx="827.2" cy="443.4" r="1" fill="#fff" stroke="#000" stroke-width="0.65"/><polyline points="827.8,442.9 836,438" fill="none" stroke="#000" stroke-width="0.8" /><circle cx="835.9" cy="443.4" r="1" fill="#fff" stroke="#000" stroke-width="0.65"/><circle cx="836.4" cy="437.7" r="0.8" fill="#000"/><polyline points="836.8,443.4 862,443.4" fill="none" stroke="#000" stroke-width="0.7" /><path d="M864.1 443.4L860.5 442.2L860.5 444.6Z" fill="#000"/><text transform="translate(867.7,448.9) rotate(-90)" font-size="2.85" fill="#000" stroke="#000" stroke-width=".09">ED:7</text><text transform="translate(871.3,449.9) rotate(-90)" font-size="2.85" fill="#000" stroke="#000" stroke-width=".09">BA:1:B</text><text transform="translate(813,442.2) rotate(-90)" font-size="2.85" fill="#000" stroke="#000" stroke-width=".09">1WVN</text><text transform="translate(846,442.2) rotate(-90)" font-size="2.85" fill="#000" stroke="#000" stroke-width=".09">0.5WA</text><text transform="translate(827,450.5) rotate(-90)" font-size="2.736" fill="#000" stroke="#000" stroke-width=".09">30</text><text transform="translate(839,450.5) rotate(-90)" font-size="2.736" fill="#000" stroke="#000" stroke-width=".09">87</text><text transform="translate(839.5,437.5) rotate(-90)" font-size="2.736" fill="#000" stroke="#000" stroke-width=".09">87A</text><rect x="830" y="444.5" width="2.6" height="9.8" fill="#aaa" stroke="#888" stroke-width="0.3"/><rect x="828.3" y="454.3" width="6.5" height="9.7" fill="#fff" stroke="#000" stroke-width="0.8"/><polyline points="828.3,464 834.8,454.3" fill="none" stroke="#000" stroke-width="0.7" /><circle cx="827.5" cy="458.9" r="0.9" fill="#fff" stroke="#000" stroke-width="0.55"/><circle cx="835.6" cy="458.9" r="0.9" fill="#fff" stroke="#000" stroke-width="0.55"/><text transform="translate(826.5,465) rotate(-90)" font-size="2.736" fill="#000" stroke="#000" stroke-width=".09">86</text><text transform="translate(839,465) rotate(-90)" font-size="2.736" fill="#000" stroke="#000" stroke-width=".09">85</text><text transform="translate(834,476.8) rotate(-90)" font-size="6.5" fill="#000" text-anchor="start" letter-spacing="-0.188" stroke="#000" stroke-width=".12">K43</text><polyline points="828.3,458.9 810.9,458.9 810.9,485.4 884.7,485.4 884.7,495.7 852.7,495.7 852.7,500.9 847,506.1" fill="none" stroke="#000" stroke-width="0.7" /><text transform="translate(859,484) rotate(-90)" font-size="2.85" fill="#000" stroke="#000" stroke-width=".09">0.5GN/R</text><text transform="translate(862,504.5) rotate(-90)" font-size="2.85" fill="#000" stroke="#000" stroke-width=".09">0.5W/N</text><circle cx="890.3" cy="506.1" r="1.05" fill="#fff" stroke="#000" stroke-width="0.65"/><text transform="translate(896.4,508.1) rotate(-90)" font-size="2.964" fill="#000" stroke="#000" stroke-width=".09">E3</text><polyline points="826.3,506.1 889.4,506.1" fill="none" stroke="#000" stroke-width="0.7" /><polyline points="826.3,506.1 836.4,506.1" fill="none" stroke="#000" stroke-width="1.3" /><circle cx="842.4" cy="506.1" r="1.3" fill="#000"/><text transform="translate(842,504) rotate(-90)" font-size="2.85" fill="#000" stroke="#000" stroke-width=".09">RED/A12</text><polyline points="826.3,506.1 826.3,589.1" fill="none" stroke="#000" stroke-width="1.3" /><circle cx="826.3" cy="537.5" r="1.4" fill="#000"/><polyline points="826.3,537.5 877.5,537.5" fill="none" stroke="#000" stroke-width="0.7" /><polyline points="826.3,537.5 836.4,537.5" fill="none" stroke="#000" stroke-width="1.3" /><circle cx="842.4" cy="537.5" r="1.3" fill="#000"/><path d="M879.8 537.5L876.2 536.3L876.2 538.7Z" fill="#000"/><text transform="translate(842,535.5) rotate(-90)" font-size="2.85" fill="#000" stroke="#000" stroke-width=".09">YELLOW/A3</text><text transform="translate(857,536.3) rotate(-90)" font-size="2.85" fill="#000" stroke="#000" stroke-width=".09">0.75R</text><text transform="translate(883.4,543) rotate(-90)" font-size="2.85" fill="#000" stroke="#000" stroke-width=".09">X2:1</text><text transform="translate(887,544) rotate(-90)" font-size="2.85" fill="#000" stroke="#000" stroke-width=".09">BB:1:D</text><polyline points="779.5,563.5 889.4,563.5" fill="none" stroke="#000" stroke-width="0.9" /><circle cx="890.3" cy="563.5" r="1.05" fill="#fff" stroke="#000" stroke-width="0.65"/><text transform="translate(896.4,565.5) rotate(-90)" font-size="2.964" fill="#000" stroke="#000" stroke-width=".09">C8</text><rect x="797.9" y="561" width="9.8" height="5" fill="#fff" stroke="#000" stroke-width="0.7"/><polyline points="797.9,563.5 807.7,563.5" fill="none" stroke="#000" stroke-width="0.6" /><circle cx="796" cy="563.5" r="1.05" fill="#fff" stroke="#000" stroke-width="0.65"/><circle cx="809.6" cy="563.5" r="1.05" fill="#fff" stroke="#000" stroke-width="0.65"/><text transform="translate(802.2,558.8) rotate(-90) scale(0.9190,1)" font-size="6" fill="#000" text-anchor="start" stroke="#000" stroke-width=".12">F16</text><text transform="translate(806.5,558.6) rotate(-90)" font-size="3.42" fill="#000" stroke="#000" stroke-width=".09">10A</text><circle cx="826.3" cy="563.5" r="1.4" fill="#000"/><circle cx="842.4" cy="563.5" r="1.3" fill="#000"/><text transform="translate(842,561.5) rotate(-90)" font-size="2.85" fill="#000" stroke="#000" stroke-width=".09">YELLOW/A1</text><text transform="translate(871,562.3) rotate(-90)" font-size="2.85" fill="#000" stroke="#000" stroke-width=".09">0.5OR/R</text><polyline points="847,563.5 852.7,568.9 852.7,579.3 872.5,579.3" fill="none" stroke="#000" stroke-width="0.7" /><path d="M874.6 579.3L871 578.1L871 580.5Z" fill="#000"/><text transform="translate(857.5,578) rotate(-90)" font-size="2.85" fill="#000" stroke="#000" stroke-width=".09">0.5GN/R</text><text transform="translate(878.2,584.8) rotate(-90)" font-size="2.85" fill="#000" stroke="#000" stroke-width=".09">A613</text><text transform="translate(881.8,585.8) rotate(-90)" font-size="2.85" fill="#000" stroke="#000" stroke-width=".09">BK500</text><text transform="translate(842,587) rotate(-90)" font-size="2.85" fill="#000" stroke="#000" stroke-width=".09">YELLOW/A2</text><polyline points="826.3,589.1 874.9,589.1" fill="none" stroke="#000" stroke-width="0.7" /><polyline points="826.3,589.1 836.4,589.1" fill="none" stroke="#000" stroke-width="1.3" /><circle cx="842.3" cy="589.1" r="1.3" fill="#000"/><polyline points="874.9,589.1 874.9,620.2 818,620.2" fill="none" stroke="#000" stroke-width="0.7" /><path d="M815.8 620.2L819.4 619L819.4 621.4Z" fill="#000"/><text transform="translate(810.6,626.7) rotate(-90)" font-size="2.85" fill="#000" stroke="#000" stroke-width=".09">ME:E:B</text><text transform="translate(814.2,625.7) rotate(-90)" font-size="2.85" fill="#000" stroke="#000" stroke-width=".09">A3:I:A3</text><text transform="translate(843.5,619) rotate(-90)" font-size="2.85" fill="#000" stroke="#000" stroke-width=".09">0.5GN/R</text><polyline points="847.4,589.1 852.4,594.3 852.4,605.2 818,605.2" fill="none" stroke="#000" stroke-width="0.7" /><path d="M815.8 605.2L819.4 604L819.4 606.4Z" fill="#000"/><text transform="translate(810.6,611.7) rotate(-90)" font-size="2.85" fill="#000" stroke="#000" stroke-width=".09">CL:E:9</text><text transform="translate(814.2,610.7) rotate(-90)" font-size="2.85" fill="#000" stroke="#000" stroke-width=".09">BA:7:A</text><text transform="translate(834,604) rotate(-90)" font-size="2.85" fill="#000" stroke="#000" stroke-width=".09">0.5GN/R</text><rect x="797.5" y="638.2" width="27.5" height="28.1" fill="none" stroke="#000" stroke-width="0.9"/><rect x="800.6" y="642.6" width="4.8" height="18.8" fill="none" stroke="#000" stroke-width="0.8"/><polyline points="803,642.6 803,641.6 824.5,641.6" fill="none" stroke="#000" stroke-width="0.6" /><polyline points="803,661.4 803,662.7 824.5,662.7" fill="none" stroke="#000" stroke-width="0.6" /><polyline points="806.5,652.6 824.5,652.6" fill="none" stroke="#000" stroke-width="0.6" /><path d="M805.4 652.6L807.9 651.7L807.9 653.5Z" fill="#000"/><circle cx="825.5" cy="641.6" r="1" fill="#fff" stroke="#000" stroke-width="0.65"/><text transform="translate(823,642.1) rotate(-90)" font-size="2.622" fill="#000" stroke="#000" stroke-width=".09">4</text><circle cx="825.5" cy="652.6" r="1" fill="#fff" stroke="#000" stroke-width="0.65"/><text transform="translate(823,653.1) rotate(-90)" font-size="2.622" fill="#000" stroke="#000" stroke-width=".09">2</text><circle cx="825.5" cy="662.7" r="1" fill="#fff" stroke="#000" stroke-width="0.65"/><text transform="translate(823,663.2) rotate(-90)" font-size="2.622" fill="#000" stroke="#000" stroke-width=".09">1</text><text transform="translate(796.6,659.2) rotate(-90) scale(0.9091,1)" font-size="6.5" fill="#000" text-anchor="start" stroke="#000" stroke-width=".12">S151</text><polyline points="826.4,641.6 872.7,641.6" fill="none" stroke="#000" stroke-width="0.7" /><path d="M874.9 641.6L871.3 640.4L871.3 642.8Z" fill="#000"/><text transform="translate(852,640.3) rotate(-90)" font-size="2.85" fill="#000" stroke="#000" stroke-width=".09">0.5W/GB</text><text transform="translate(878.5,647.1) rotate(-90)" font-size="2.85" fill="#000" stroke="#000" stroke-width=".09">X3CC</text><text transform="translate(882.1,648.1) rotate(-90)" font-size="2.85" fill="#000" stroke="#000" stroke-width=".09">CE:1:C</text><polyline points="826.4,652.6 857.5,652.6 857.5,693 853.5,698" fill="none" stroke="#000" stroke-width="0.7" /><text transform="translate(856,676) rotate(-90)" font-size="2.85" fill="#000" stroke="#000" stroke-width=".09">0.5Y/W</text><polyline points="826.4,662.7 847.4,662.7 847.4,678.2 818,678.2" fill="none" stroke="#000" stroke-width="0.7" /><path d="M815.8 678.2L819.4 677L819.4 679.4Z" fill="#000"/><text transform="translate(810.6,684.7) rotate(-90)" font-size="2.85" fill="#000" stroke="#000" stroke-width=".09">CK:1:P</text><text transform="translate(814.2,683.7) rotate(-90)" font-size="2.85" fill="#000" stroke="#000" stroke-width=".09">XA06</text><text transform="translate(832.5,677) rotate(-90)" font-size="2.85" fill="#000" stroke="#000" stroke-width=".09">0.5P</text><polyline points="818,699.3 889.4,699.3" fill="none" stroke="#000" stroke-width="0.7" /><path d="M815.8 699.3L819.4 698.1L819.4 700.5Z" fill="#000"/><text transform="translate(810.6,705.8) rotate(-90)" font-size="2.85" fill="#000" stroke="#000" stroke-width=".09">ME:E:B</text><text transform="translate(814.2,704.8) rotate(-90)" font-size="2.85" fill="#000" stroke="#000" stroke-width=".09">A3:I:A3</text><circle cx="852.4" cy="699.3" r="1.8" fill="#fff" stroke="#000" stroke-width="0.7"/><circle cx="890.3" cy="699.3" r="1.05" fill="#fff" stroke="#000" stroke-width="0.65"/><text transform="translate(896.4,701.3) rotate(-90)" font-size="2.964" fill="#000" stroke="#000" stroke-width=".09">A2</text><text transform="translate(831,698) rotate(-90)" font-size="2.85" fill="#000" stroke="#000" stroke-width=".09">0.5Y/W</text><text transform="translate(848.5,697) rotate(-90)" font-size="2.85" fill="#000" stroke="#000" stroke-width=".09">X38A</text><text transform="translate(887.5,698) rotate(-90)" font-size="2.85" fill="#000" stroke="#000" stroke-width=".09">0.5Y/N</text><circle cx="910.400" cy="493.300" r="7.300" fill="none" stroke="#000" stroke-width=".8"/><polyline points="905.5,488 910.4,494 915.3,488" fill="none" stroke="#000" stroke-width="0.7" /><polyline points="906,494 914.8,494" fill="none" stroke="#000" stroke-width="0.8" /><polyline points="910.4,494 910.4,500" fill="none" stroke="#000" stroke-width="0.7" /><text transform="translate(915,717.5) rotate(-90)" font-size="6.5" fill="#000" text-anchor="start" stroke="#000" stroke-width=".12">A03</text></svg>
<div class="a" style="left:0px;top:713px;width:1365px;height:25px;background:#f0f0f0"></div>
<div class="a" style="left:0px;top:713px;width:1365px;height:1px;background:#8a8a8a"></div>
<div class="a" style="left:0px;top:714px;width:1365px;height:1px;background:#fbfbfb"></div>
<div class="a" style="left:20px;top:713px;width:6px;height:2px;background:#f0f0f0"></div>
<svg style="left:11px;top:718px" width="16" height="16" viewBox="0 0 16 16"><rect x=".3" y=".3" width="15.400" height="13" fill="#d0d0d0" stroke="#888" stroke-width=".6"/><rect x="2" y="2" width="12" height="9" fill="#000"/><rect x="5" y="3" width="6.500" height="7" fill="#c8dcf8"/><path d="M6 5H10.500M6 7H10.500M6 9H10" stroke="#7890c0" stroke-width=".8"/><rect x="13" y="11.800" width="1.500" height="1.500" fill="#20e030"/><rect x="3" y="14.500" width="10" height="1.200" fill="#909090"/></svg>
<svg style="left:44px;top:719px" width="14" height="15" viewBox="0 0 14 15"><rect x=".5" y=".5" width="13" height="14" fill="#fff" stroke="#888" stroke-width="1"/><rect x=".5" y="5" width="13" height="9.500" fill="url(#gPg)" stroke="#4a68a8" stroke-width="1"/><rect x="4" y="8.200" width="6" height="1.800" fill="#3848a0"/><path d="M.5 .5H13.500V5H.5Z" fill="#fff" stroke="#888"/></svg>
<div class="a" style="left:539px;top:715px;width:1px;height:23px;background:#fff"></div>
<div class="a" style="left:553px;top:719px;width:4px;height:15px;background:linear-gradient(#2a62b8,#7aa8e4 40%,#2a62b8)"></div>
<svg style="left:559px;top:719px" width="9" height="15" viewBox="0 0 9 15"><path d="M9 0 L0 7.5 L9 15 Z" fill="url(#gNvL)"/><path d="M9 0 L0 7.5 L9 15 Z" fill="none" stroke="#2a5aa8" stroke-width=".5"/></svg>
<svg style="left:588px;top:719px" width="9" height="15" viewBox="0 0 9 15"><path d="M9 0 L0 7.5 L9 15 Z" fill="url(#gNvL)"/><path d="M9 0 L0 7.5 L9 15 Z" fill="none" stroke="#2a5aa8" stroke-width=".5"/></svg>
<div class="a" style="left:609px;top:715px;width:74px;height:23px;background:#fff;border:1px solid #6e6e6e;border-right-color:#b0b0b0;box-sizing:border-box"></div>
<span class="t" style="left:625.7px;top:720.07px;font-size:11.5px;line-height:11.5px;letter-spacing:-0.282px;color:#000;">24 of 46</span>
<svg style="left:694px;top:719px" width="9" height="15" viewBox="0 0 9 15"><path d="M0 0 L9 7.5 L0 15 Z" fill="url(#gNv)"/><path d="M0 0 L9 7.5 L0 15 Z" fill="none" stroke="#2a5aa8" stroke-width=".5"/></svg>
<svg style="left:723px;top:719px" width="9" height="15" viewBox="0 0 9 15"><path d="M0 0 L9 7.5 L0 15 Z" fill="url(#gNv)"/><path d="M0 0 L9 7.5 L0 15 Z" fill="none" stroke="#2a5aa8" stroke-width=".5"/></svg>
<div class="a" style="left:734px;top:719px;width:4px;height:15px;background:linear-gradient(#2a62b8,#7aa8e4 40%,#2a62b8)"></div>
<div class="a" style="left:751px;top:715px;width:1px;height:23px;background:#a0a0a0"></div>
<div class="a" style="left:752px;top:715px;width:1px;height:23px;background:#fff"></div>
<div class="a" style="left:825px;top:715px;width:1px;height:23px;background:#a0a0a0"></div>
<div class="a" style="left:826px;top:715px;width:1px;height:23px;background:#fff"></div>
<svg style="left:765px;top:718px" width="16" height="16" viewBox="0 0 16 16"><circle cx="8" cy="8" r="7.700" fill="url(#gHp)" stroke="#3a7a2a" stroke-width=".5"/><path d="M3.500 8L8 4V6.500H12V9.500H8V12Z" fill="#fff"/></svg>
<svg style="left:797px;top:718px" width="16" height="16" viewBox="0 0 16 16"><circle cx="8" cy="8" r="7.700" fill="url(#gGy)" stroke="#a0a0a0" stroke-width=".5"/><path d="M12.500 8L8 4V6.500H4V9.500H8V12Z" fill="#f4f4f4"/></svg>
<div class="a" style="left:577px;top:704px;width:135px;height:34px;border:3px solid #ff0000;border-radius:3px;box-sizing:border-box"></div>
<svg style="left:1243px;top:719px" width="15" height="16" viewBox="0 0 15 16"><rect x=".8" y=".8" width="12.500" height="14" fill="url(#gPg)" stroke="#7a9cd8" stroke-width="1"/></svg>
<svg style="left:1275px;top:719px" width="15" height="16" viewBox="0 0 15 16"><path d="M.8 0V5.500H13.300V0" fill="url(#gPg)" stroke="#7a9cd8" stroke-width="1"/><rect x=".8" y="8.500" width="12.500" height="6.300" fill="url(#gPg)" stroke="#7a9cd8" stroke-width="1"/></svg>
<svg style="left:1307px;top:719px" width="15" height="16" viewBox="0 0 15 16"><path d="M.8 0V5.500H6V0M8.200 0V5.500H13.400V0" fill="url(#gPg)" stroke="#7a9cd8" stroke-width="1"/><path d="M.8 15V8.500H6V15M8.200 15V8.500H13.400V15" fill="url(#gPg)" stroke="#7a9cd8" stroke-width="1"/></svg>
<div class="a" style="left:1331px;top:715px;width:32px;height:22px;background:#f8f8f8;border:1px solid #fff;border-top-color:#a8a8a8;border-left-color:#a8a8a8;box-sizing:border-box"></div>
<svg style="left:1339px;top:720px" width="17" height="11" viewBox="0 0 17 11"><rect x=".6" y=".6" width="6.200" height="9.800" fill="url(#gPg)" stroke="#7a9cd8" stroke-width="1"/><rect x="9.400" y=".6" width="6.200" height="9.800" fill="url(#gPg)" stroke="#7a9cd8" stroke-width="1"/></svg>
</body></html>
